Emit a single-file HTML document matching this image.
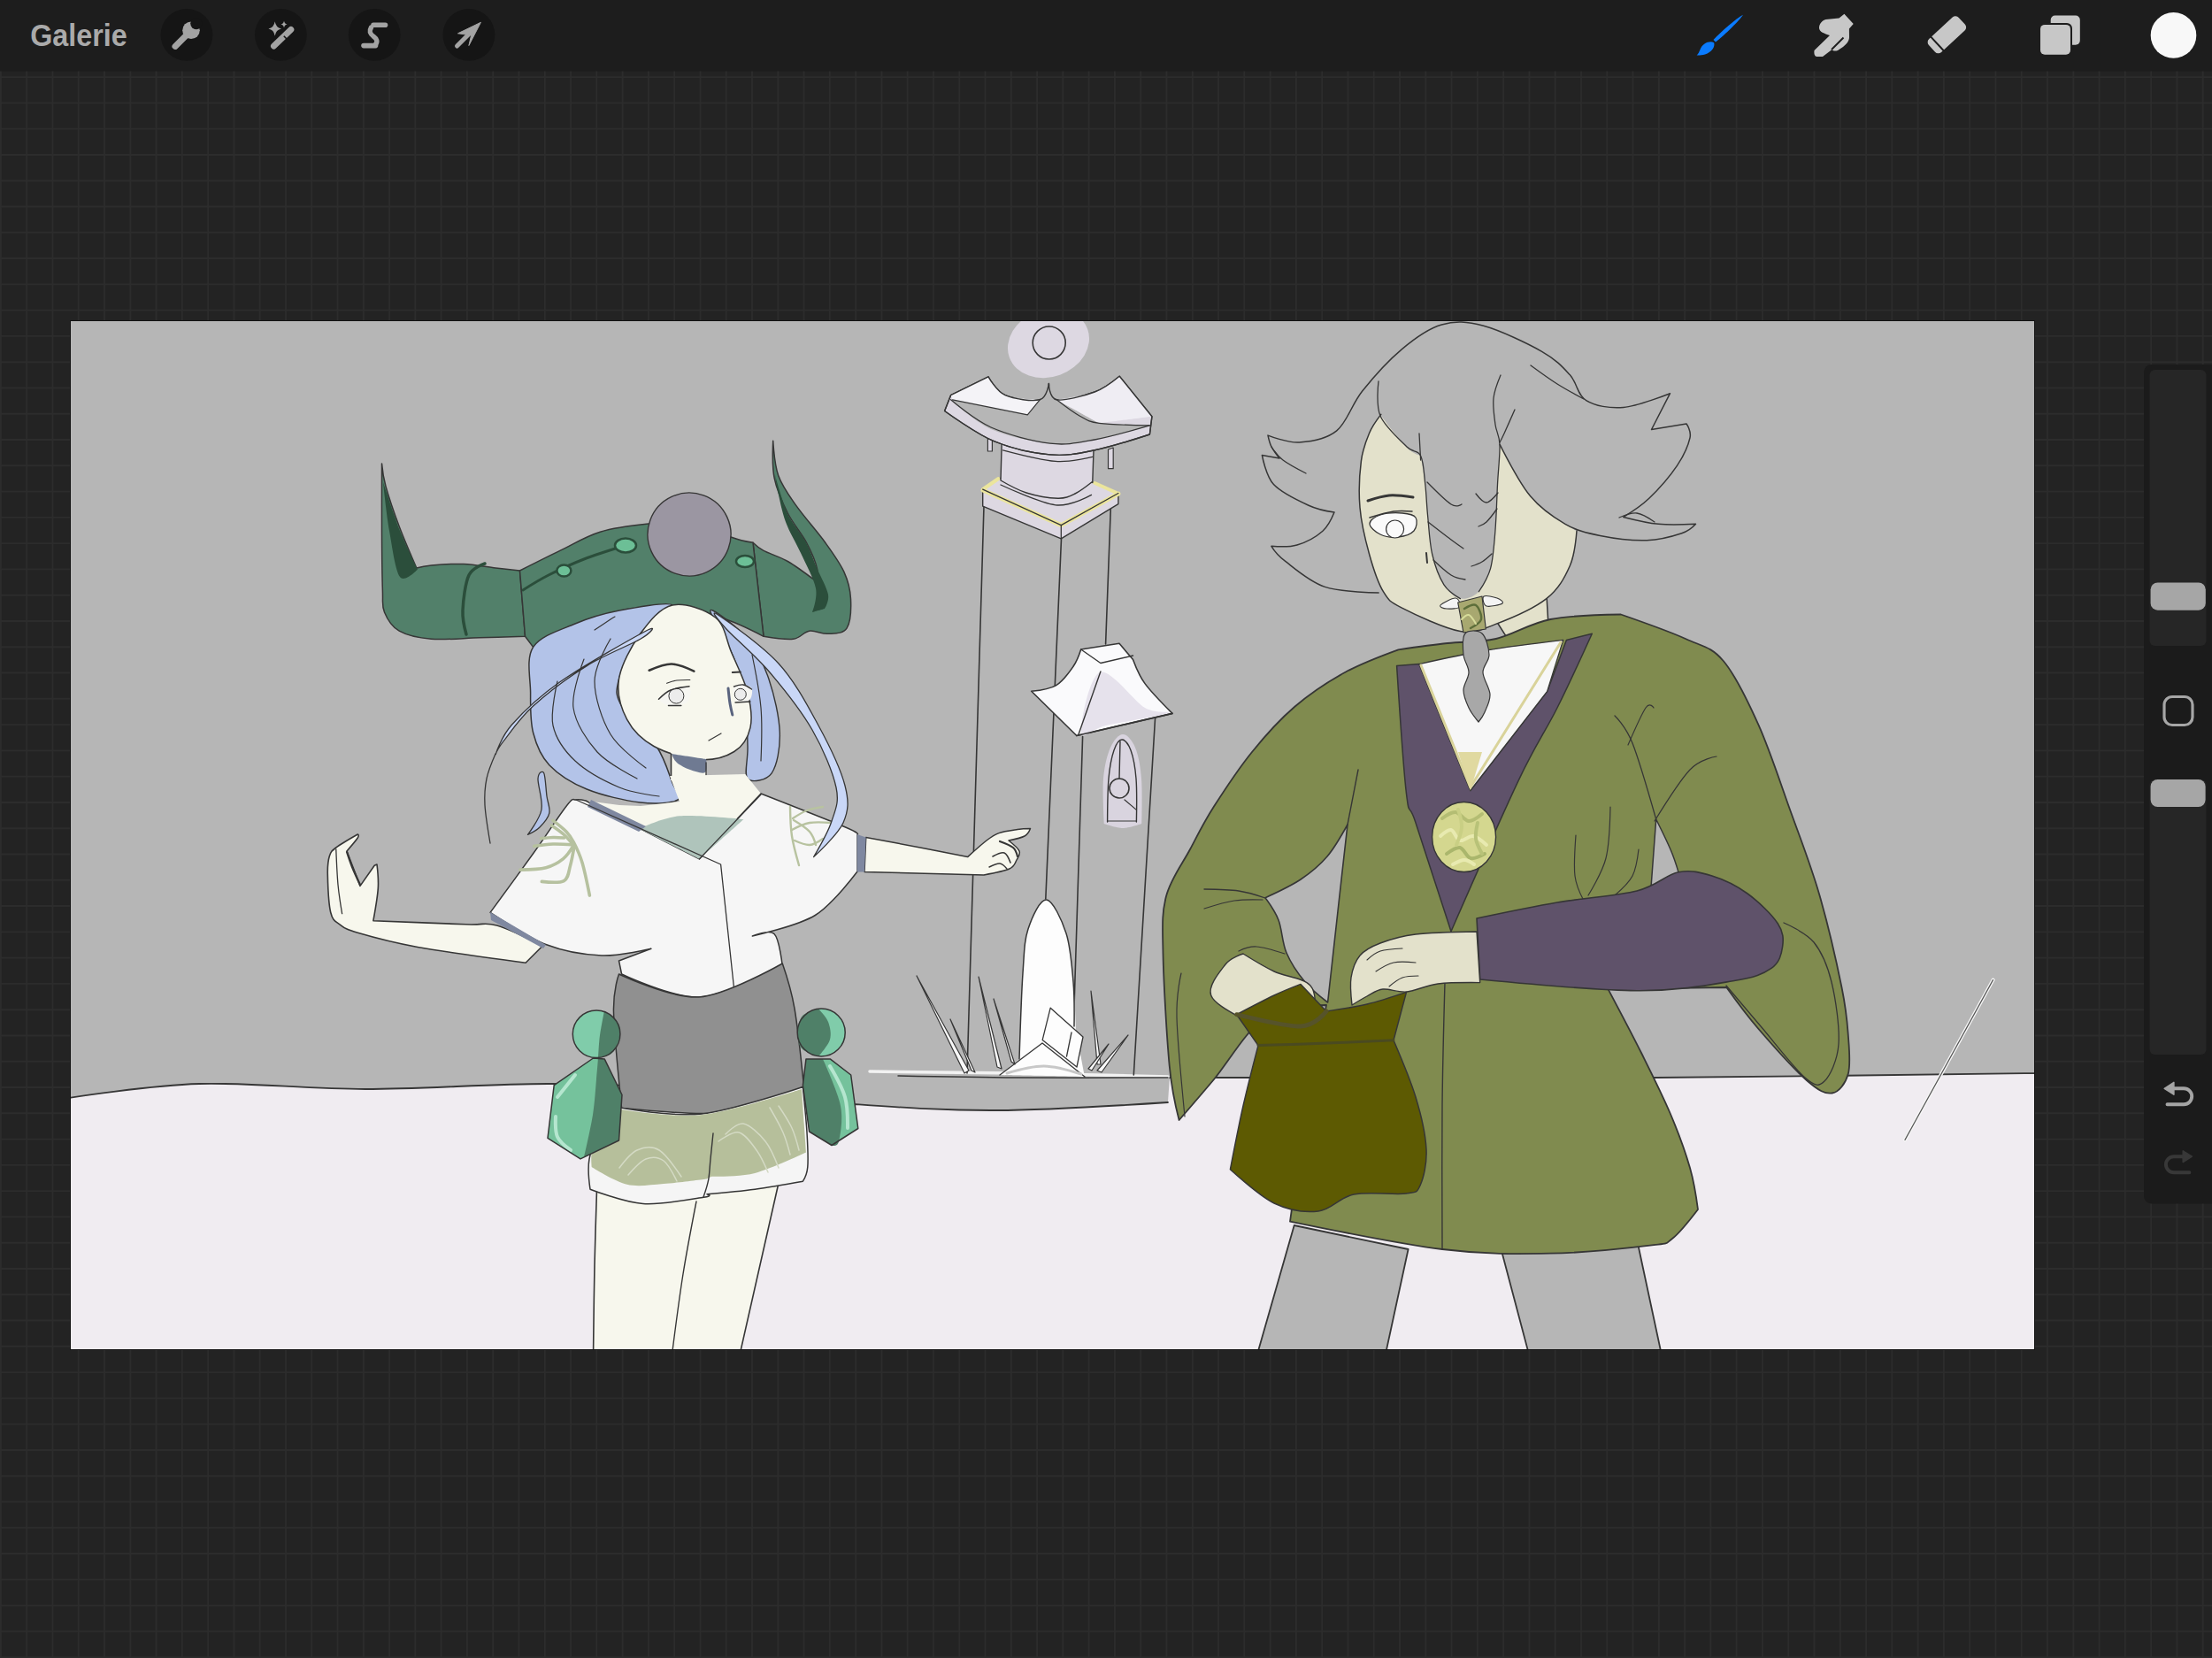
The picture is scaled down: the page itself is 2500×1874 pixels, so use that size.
<!DOCTYPE html>
<html><head><meta charset="utf-8"><style>
html,body{margin:0;padding:0;background:#232323;width:2500px;height:1874px;overflow:hidden}
svg{position:absolute;left:0;top:0;display:block}
</style></head><body>
<svg width="2500" height="1874" viewBox="0 0 2500 1874">
<rect x="0" y="0" width="2500" height="1874" fill="#232323"/>
<path d="M0.90 80V1874 M30.18 80V1874 M59.46 80V1874 M88.74 80V1874 M118.02 80V1874 M147.30 80V1874 M176.58 80V1874 M205.86 80V1874 M235.14 80V1874 M264.42 80V1874 M293.70 80V1874 M322.98 80V1874 M352.26 80V1874 M381.54 80V1874 M410.82 80V1874 M440.10 80V1874 M469.38 80V1874 M498.66 80V1874 M527.94 80V1874 M557.22 80V1874 M586.50 80V1874 M615.78 80V1874 M645.06 80V1874 M674.34 80V1874 M703.62 80V1874 M732.90 80V1874 M762.18 80V1874 M791.46 80V1874 M820.74 80V1874 M850.02 80V1874 M879.30 80V1874 M908.58 80V1874 M937.86 80V1874 M967.14 80V1874 M996.42 80V1874 M1025.70 80V1874 M1054.98 80V1874 M1084.26 80V1874 M1113.54 80V1874 M1142.82 80V1874 M1172.10 80V1874 M1201.38 80V1874 M1230.66 80V1874 M1259.94 80V1874 M1289.22 80V1874 M1318.50 80V1874 M1347.78 80V1874 M1377.06 80V1874 M1406.34 80V1874 M1435.62 80V1874 M1464.90 80V1874 M1494.18 80V1874 M1523.46 80V1874 M1552.74 80V1874 M1582.02 80V1874 M1611.30 80V1874 M1640.58 80V1874 M1669.86 80V1874 M1699.14 80V1874 M1728.42 80V1874 M1757.70 80V1874 M1786.98 80V1874 M1816.26 80V1874 M1845.54 80V1874 M1874.82 80V1874 M1904.10 80V1874 M1933.38 80V1874 M1962.66 80V1874 M1991.94 80V1874 M2021.22 80V1874 M2050.50 80V1874 M2079.78 80V1874 M2109.06 80V1874 M2138.34 80V1874 M2167.62 80V1874 M2196.90 80V1874 M2226.18 80V1874 M2255.46 80V1874 M2284.74 80V1874 M2314.02 80V1874 M2343.30 80V1874 M2372.58 80V1874 M2401.86 80V1874 M2431.14 80V1874 M2460.42 80V1874 M2489.70 80V1874 M0 87.10H2500 M0 116.38H2500 M0 145.66H2500 M0 174.94H2500 M0 204.22H2500 M0 233.50H2500 M0 262.78H2500 M0 292.06H2500 M0 321.34H2500 M0 350.62H2500 M0 379.90H2500 M0 409.18H2500 M0 438.46H2500 M0 467.74H2500 M0 497.02H2500 M0 526.30H2500 M0 555.58H2500 M0 584.86H2500 M0 614.14H2500 M0 643.42H2500 M0 672.70H2500 M0 701.98H2500 M0 731.26H2500 M0 760.54H2500 M0 789.82H2500 M0 819.10H2500 M0 848.38H2500 M0 877.66H2500 M0 906.94H2500 M0 936.22H2500 M0 965.50H2500 M0 994.78H2500 M0 1024.06H2500 M0 1053.34H2500 M0 1082.62H2500 M0 1111.90H2500 M0 1141.18H2500 M0 1170.46H2500 M0 1199.74H2500 M0 1229.02H2500 M0 1258.30H2500 M0 1287.58H2500 M0 1316.86H2500 M0 1346.14H2500 M0 1375.42H2500 M0 1404.70H2500 M0 1433.98H2500 M0 1463.26H2500 M0 1492.54H2500 M0 1521.82H2500 M0 1551.10H2500 M0 1580.38H2500 M0 1609.66H2500 M0 1638.94H2500 M0 1668.22H2500 M0 1697.50H2500 M0 1726.78H2500 M0 1756.06H2500 M0 1785.34H2500 M0 1814.62H2500 M0 1843.90H2500 M0 1873.18H2500" stroke="#2c2c2c" stroke-width="1.9" fill="none"/>
<!-- toolbar -->
<rect x="0" y="0" width="2500" height="80.5" fill="#1d1d1d"/>
<text transform="translate(34.2 51.5) scale(1.01 1.1)" x="0" y="0" font-family="Liberation Sans" font-weight="bold" font-size="32" fill="#aaaaaa">Galerie</text>
<circle cx="211" cy="39.4" r="29.4" fill="#151515"/>
<circle cx="317.4" cy="39.4" r="29.4" fill="#151515"/>
<circle cx="423.2" cy="39.4" r="29.4" fill="#151515"/>
<circle cx="529.9" cy="39.4" r="29.4" fill="#151515"/>
<!-- wrench -->
<g fill="#a3a3a3" stroke="none">
<path d="M198 52.4 L215 35.5" stroke="#a3a3a3" stroke-width="7" stroke-linecap="round"/>
<circle cx="216" cy="34.2" r="9.8"/>
<circle cx="221.8" cy="26.6" r="6.6" fill="#151515"/>
</g>
<!-- wand -->
<path d="M309.5 52 L328.8 33.5" stroke="#a3a3a3" stroke-width="7" stroke-linecap="round"/>
<path d="M320.8 40.8 L324 44" stroke="#151515" stroke-width="1.6"/>
<path d="M310.7 24.3 Q311.8 31.4 318 32.5 Q311.8 33.6 310.7 40.6 Q309.6 33.6 303.4 32.5 Q309.6 31.4 310.7 24.3Z" fill="#a3a3a3"/>
<path d="M321 23.5 Q321.5 27 324.5 27.5 Q321.5 28 321 31.5 Q320.5 28 317.5 27.5 Q320.5 27 321 23.5Z" fill="#a3a3a3"/>
<!-- selection S -->
<path d="M422 28.2 L435.5 28.2" stroke="#a3a3a3" stroke-width="5.6" stroke-linecap="round"/>
<path d="M419.5 31 C416.5 36 419 39 422.5 41.5 C426 44 427 47 424.5 50" stroke="#a3a3a3" stroke-width="5.4" fill="none" stroke-linecap="round"/>
<path d="M411 51.6 L424.5 51.6" stroke="#a3a3a3" stroke-width="5.6" stroke-linecap="round"/>
<!-- arrow -->
<path d="M516.5 52 L532 36.5" stroke="#a3a3a3" stroke-width="5" stroke-linecap="round"/>
<path d="M543.4 25.3 L517.5 37.8 L532.6 39.8 L529.9 51.5 Z" fill="#a3a3a3" stroke="#a3a3a3" stroke-width="1" stroke-linejoin="round"/>
<!-- brush -->
<path d="M1970 16.8 C1966 23 1950 39 1939 47.5 L1936.5 45 C1946 35 1962 21 1970 16.8Z" fill="#0a7bff"/>
<path d="M1937.2 48.2 C1938.6 53 1934.5 59 1927 61.5 C1923 62.6 1919 62.8 1917.6 62.4 C1921.5 59.5 1921 53 1926.5 49.5 C1929.5 47.5 1934 46.5 1937.2 48.2Z" fill="#0a7bff"/>
<!-- smudge -->
<path d="M2050.5 57 L2068 40 C2062 38 2056 36 2056 31.5 C2056 27 2059.5 23 2063.5 22 L2078.5 20.5 L2084.4 15.7 L2094.7 27.1 L2089.9 32.5 L2090 42 C2090 46 2087 50 2083 53 L2077 57 C2074 58 2071 57.5 2070.5 56 L2060 64 L2053.5 64 C2051 64 2050 61 2050.5 57Z" fill="#c7c7c7"/>
<path d="M2070 56 L2083.5 42.5" stroke="#1d1d1d" stroke-width="2"/>
<!-- eraser -->
<g transform="rotate(-42.7 2200.4 39.3)">
<rect x="2177.4" y="29.1" width="46" height="20.4" rx="5" fill="#c7c7c7"/>
<path d="M2185.5 28 L2185.5 51" stroke="#1d1d1d" stroke-width="2"/>
</g>
<!-- layers -->
<rect x="2317.7" y="17.6" width="33.1" height="33.1" rx="5" fill="#c7c7c7"/>
<rect x="2304" y="26" width="38" height="37.7" rx="6" fill="#1d1d1d"/>
<rect x="2306" y="27.9" width="34" height="33.9" rx="5" fill="#c7c7c7"/>
<circle cx="2456.5" cy="39.9" r="25.8" fill="#f8f8f8"/>
<!-- sidebar -->
<rect x="2423" y="412" width="100" height="948.5" rx="8.5" fill="#1b1b1b"/>
<rect x="2429.5" y="418" width="64" height="312" rx="6" fill="#262626"/>
<rect x="2430.6" y="658.4" width="62.2" height="31.3" rx="8" fill="#a6a6a6"/>
<rect x="2429.5" y="881" width="64" height="311" rx="6" fill="#262626"/>
<rect x="2430.6" y="881" width="62" height="31" rx="8" fill="#a6a6a6"/>
<rect x="2446" y="787.5" width="32" height="32" rx="9" fill="none" stroke="#a6a6a6" stroke-width="3.2"/>
<!-- undo / redo -->
<path d="M2456 1230.3 H2468.2 A9 9 0 0 1 2468.2 1248.3 H2449.5" fill="none" stroke="#a4a4a4" stroke-width="3.9" stroke-linecap="round"/>
<path d="M2446.2 1230.3 L2456.9 1223.4 L2456.9 1237.2Z" fill="#a4a4a4" stroke="#a4a4a4" stroke-width="1.5" stroke-linejoin="round"/>
<path d="M2468 1307.2 H2456.9 A9 9 0 0 0 2456.9 1325.2 H2474.4" fill="none" stroke="#383838" stroke-width="3.9" stroke-linecap="round"/>
<path d="M2477.4 1307.2 L2467.2 1300.8 L2467.2 1313.6Z" fill="#383838" stroke="#383838" stroke-width="1.5" stroke-linejoin="round"/>

<g>
<rect x="79" y="362" width="2221" height="1164" fill="#131313"/>
<rect x="80" y="363" width="2219" height="1162" fill="#b6b6b6"/>
<clipPath id="cv"><rect x="80" y="363" width="2219" height="1162"/></clipPath>
<g clip-path="url(#cv)">
<path d="M78.0 1241.0 C78.0 1241.0 169.2 1226.7 225.0 1225.0 C280.8 1223.3 347.0 1231.0 413.0 1231.0 C479.0 1231.0 556.5 1224.8 621.0 1225.0 C685.5 1225.2 742.7 1228.2 800.0 1232.0 C857.3 1235.8 910.7 1244.2 965.0 1248.0 C1019.3 1251.8 1066.8 1255.3 1126.0 1255.0 C1185.2 1254.7 1320.0 1246.0 1320.0 1246.0 C1320.0 1246.0 1322.0 1218.0 1322.0 1218.0 C1322.0 1218.0 1508.3 1218.0 1600.0 1218.0 C1691.7 1218.0 1755.2 1218.8 1872.0 1218.0 C1988.8 1217.2 2301.0 1213.0 2301.0 1213.0 C2301.0 1213.0 2301.0 1527.0 2301.0 1527.0 C2301.0 1527.0 78.0 1527.0 78.0 1527.0 C78.0 1527.0 78.0 1241.0 78.0 1241.0Z" fill="#f0ecf1" stroke="none" stroke-width="2" stroke-linejoin="round" stroke-linecap="round" />
<path d="M78.0 1241.0 C78.0 1241.0 169.2 1226.7 225.0 1225.0 C280.8 1223.3 347.0 1231.0 413.0 1231.0 C479.0 1231.0 556.5 1224.8 621.0 1225.0 C685.5 1225.2 742.7 1228.2 800.0 1232.0 C857.3 1235.8 910.7 1244.2 965.0 1248.0 C1019.3 1251.8 1066.8 1255.3 1126.0 1255.0 C1185.2 1254.7 1320.0 1246.0 1320.0 1246.0" fill="none" stroke="#363636" stroke-width="1.8" stroke-linejoin="round" stroke-linecap="round" />
<path d="M1322.0 1218.0 C1322.0 1218.0 1508.3 1218.0 1600.0 1218.0 C1691.7 1218.0 1755.2 1218.8 1872.0 1218.0 C1988.8 1217.2 2301.0 1213.0 2301.0 1213.0" fill="none" stroke="#363636" stroke-width="1.8" stroke-linejoin="round" stroke-linecap="round" />
<path d="M983.0 1211.0 L1150.0 1213.0 L1320.0 1217.0" fill="none" stroke="#f2f2f2" stroke-width="3.5" stroke-linejoin="round" stroke-linecap="round" />
<path d="M1015.0 1216.0 C1015.0 1216.0 1099.2 1217.7 1150.0 1218.0 C1200.8 1218.3 1320.0 1218.0 1320.0 1218.0" fill="none" stroke="#363636" stroke-width="1.5" stroke-linejoin="round" stroke-linecap="round" />
<ellipse cx="1185" cy="388" rx="47" ry="38" fill="#ddd8e2" transform="rotate(-20 1185 388)"/>
<circle cx="1185.7" cy="387.5" r="18.5" fill="none" stroke="#363636" stroke-width="1.6"/>
<path d="M1112.0 572.0 L1093.0 1213.0" fill="none" stroke="#363636" stroke-width="1.6" stroke-linejoin="round" stroke-linecap="round" />
<path d="M1199.5 609.0 L1181.8 1016.0" fill="none" stroke="#363636" stroke-width="1.6" stroke-linejoin="round" stroke-linecap="round" />
<path d="M1255.4 572.0 L1249.6 728.0" fill="none" stroke="#363636" stroke-width="1.6" stroke-linejoin="round" stroke-linecap="round" />
<path d="M1305.6 811.0 L1281.3 1215.0" fill="none" stroke="#363636" stroke-width="1.6" stroke-linejoin="round" stroke-linecap="round" />
<path d="M1223.6 832.5 L1213.4 1157.0" fill="none" stroke="#363636" stroke-width="1.6" stroke-linejoin="round" stroke-linecap="round" />
<path d="M1116.4 495.0 L1116.4 510.0 L1121.4 510.0 L1121.4 497.0Z" fill="#ddd8e2" stroke="#363636" stroke-width="1.2" stroke-linejoin="round" stroke-linecap="round" />
<path d="M1252.5 508.0 L1252.5 529.7 L1258.2 529.7 L1258.2 506.0Z" fill="#ddd8e2" stroke="#363636" stroke-width="1.2" stroke-linejoin="round" stroke-linecap="round" />
<path d="M1110.7 553.1 L1128.4 540.4 L1237.3 545.5 L1263.9 557.5 L1263.9 569.6 L1199.3 608.8 L1110.7 572.1Z" fill="#ddd8e2" stroke="#363636" stroke-width="1.4" stroke-linejoin="round" stroke-linecap="round" />
<path d="M1111.0 554.0 L1199.3 593.6 L1263.9 558.0" fill="none" stroke="#ebe59c" stroke-width="5" stroke-linejoin="round" stroke-linecap="round" />
<path d="M1111.0 553.0 L1128.4 541.0" fill="none" stroke="#ebe59c" stroke-width="4" stroke-linejoin="round" stroke-linecap="round" />
<path d="M1237.3 546.0 L1262.0 557.0" fill="none" stroke="#ebe59c" stroke-width="4" stroke-linejoin="round" stroke-linecap="round" />
<path d="M1110.7 553.1 L1199.3 593.6 L1263.9 557.5" fill="none" stroke="#363636" stroke-width="1.3" stroke-linejoin="round" stroke-linecap="round" />
<path d="M1199.3 593.6 L1199.3 608.8" fill="none" stroke="#363636" stroke-width="1.3" stroke-linejoin="round" stroke-linecap="round" />
<path d="M1132.2 500.0 C1132.2 500.0 1167.7 506.5 1185.0 508.0 C1202.3 509.5 1236.0 509.0 1236.0 509.0 C1236.0 509.0 1234.8 544.2 1234.8 544.2 C1234.8 544.2 1221.5 554.8 1215.0 558.0 C1208.5 561.2 1204.7 563.4 1195.5 563.2 C1186.3 563.0 1170.8 560.4 1160.0 557.0 C1149.2 553.6 1131.0 543.0 1131.0 543.0 C1131.0 543.0 1132.2 500.0 1132.2 500.0Z" fill="#ddd8e2" stroke="#363636" stroke-width="1.4" stroke-linejoin="round" stroke-linecap="round" />
<path d="M1131.0 548.0 C1131.0 548.0 1175.9 568.9 1193.0 570.8 C1210.1 572.7 1233.5 559.4 1233.5 559.4" fill="none" stroke="#363636" stroke-width="1.3" stroke-linejoin="round" stroke-linecap="round" />
<path d="M1133.5 508.8 C1133.5 508.8 1176.1 520.1 1193.0 521.4 C1209.9 522.7 1234.8 516.4 1234.8 516.4" fill="none" stroke="#363636" stroke-width="1.3" stroke-linejoin="round" stroke-linecap="round" />
<path d="M1117.0 425.8 C1117.0 425.8 1074.6 446.7 1074.6 446.7 C1074.6 446.7 1067.6 464.5 1067.6 464.5 C1067.6 464.5 1103.5 490.5 1123.3 498.7 C1143.1 506.9 1167.6 512.2 1186.6 513.9 C1205.6 515.6 1218.5 512.6 1237.3 508.8 C1256.1 505.0 1299.4 491.0 1299.4 491.0 C1299.4 491.0 1301.9 470.8 1301.9 470.8 C1301.9 470.8 1265.2 425.2 1265.2 425.2 C1265.2 425.2 1249.1 438.6 1237.3 443.0 C1225.5 447.4 1202.8 453.4 1194.2 451.8 C1185.6 450.2 1185.4 433.4 1185.4 433.4 C1185.4 433.4 1183.4 449.6 1175.2 451.8 C1167.0 454.0 1145.7 451.0 1136.0 446.7 C1126.3 442.4 1117.0 425.8 1117.0 425.8Z" fill="#ddd8e2" stroke="#363636" stroke-width="1.4" stroke-linejoin="round" stroke-linecap="round" />
<path d="M1175.2 451.8 C1175.2 451.8 1185.4 433.4 1185.4 433.4 C1185.4 433.4 1194.2 451.8 1194.2 451.8 C1194.2 451.8 1242.4 478.4 1242.4 478.4 C1242.4 478.4 1299.4 480.9 1299.4 480.9 C1299.4 480.9 1255.8 493.6 1237.0 497.0 C1218.2 500.4 1206.1 503.2 1186.6 501.2 C1167.1 499.2 1138.7 493.2 1120.0 485.0 C1101.3 476.8 1074.6 451.8 1074.6 451.8 C1074.6 451.8 1161.3 468.9 1161.3 468.9 C1161.3 468.9 1175.2 451.8 1175.2 451.8Z" fill="#b6b6b6" stroke="none" stroke-width="2" stroke-linejoin="round" stroke-linecap="round" />
<path d="M1117.0 425.8 C1117.0 425.8 1126.3 442.4 1136.0 446.7 C1145.7 451.0 1175.2 451.8 1175.2 451.8 C1175.2 451.8 1161.3 468.9 1161.3 468.9 C1161.3 468.9 1076.5 451.8 1076.5 451.8 C1076.5 451.8 1074.6 446.7 1074.6 446.7 C1074.6 446.7 1117.0 425.8 1117.0 425.8Z" fill="#f4f3f7" stroke="none" stroke-width="2" stroke-linejoin="round" stroke-linecap="round" />
<path d="M1265.2 425.2 C1265.2 425.2 1301.9 470.8 1301.9 470.8 C1301.9 470.8 1242.4 478.4 1242.4 478.4 C1242.4 478.4 1194.2 451.8 1194.2 451.8 C1194.2 451.8 1225.5 447.4 1237.3 443.0 C1249.1 438.6 1265.2 425.2 1265.2 425.2Z" fill="#efedf3" stroke="none" stroke-width="2" stroke-linejoin="round" stroke-linecap="round" />
<path d="M1117.0 425.8 C1117.0 425.8 1074.6 446.7 1074.6 446.7 C1074.6 446.7 1067.6 464.5 1067.6 464.5 C1067.6 464.5 1103.5 490.5 1123.3 498.7 C1143.1 506.9 1167.6 512.2 1186.6 513.9 C1205.6 515.6 1218.5 512.6 1237.3 508.8 C1256.1 505.0 1299.4 491.0 1299.4 491.0 C1299.4 491.0 1301.9 470.8 1301.9 470.8 C1301.9 470.8 1265.2 425.2 1265.2 425.2 C1265.2 425.2 1249.1 438.6 1237.3 443.0 C1225.5 447.4 1202.8 453.4 1194.2 451.8 C1185.6 450.2 1185.4 433.4 1185.4 433.4 C1185.4 433.4 1183.4 449.6 1175.2 451.8 C1167.0 454.0 1145.7 451.0 1136.0 446.7 C1126.3 442.4 1117.0 425.8 1117.0 425.8Z" fill="none" stroke="#363636" stroke-width="1.4" stroke-linejoin="round" stroke-linecap="round" />
<path d="M1074.6 451.8 C1074.6 451.8 1101.3 474.8 1120.0 483.0 C1138.7 491.2 1167.1 498.9 1186.6 501.2 C1206.1 503.5 1218.2 500.4 1237.0 497.0 C1255.8 493.6 1299.4 480.9 1299.4 480.9" fill="none" stroke="#363636" stroke-width="1.3" stroke-linejoin="round" stroke-linecap="round" />
<path d="M1076.5 451.8 L1161.3 468.9 L1175.2 451.8" fill="none" stroke="#363636" stroke-width="1.2" stroke-linejoin="round" stroke-linecap="round" />
<path d="M1194.2 451.8 C1194.2 451.8 1212.0 465.6 1220.0 470.0 C1228.0 474.4 1229.2 476.6 1242.4 478.4 C1255.6 480.2 1299.4 480.9 1299.4 480.9" fill="none" stroke="#363636" stroke-width="1.2" stroke-linejoin="round" stroke-linecap="round" />
<path d="M1221.7 734.0 C1221.7 734.0 1265.0 727.3 1265.0 727.3 C1265.0 727.3 1280.5 745.6 1280.5 745.6 C1280.5 745.6 1286.6 762.5 1294.0 772.6 C1301.4 782.7 1325.0 806.4 1325.0 806.4 C1325.0 806.4 1216.8 831.5 1216.8 831.5 C1216.8 831.5 1165.7 781.3 1165.7 781.3 C1165.7 781.3 1185.8 779.3 1193.7 774.6 C1201.6 769.9 1208.3 760.1 1213.0 753.3 C1217.7 746.5 1221.7 734.0 1221.7 734.0Z" fill="#fafafc" stroke="#363636" stroke-width="1.6" stroke-linejoin="round" stroke-linecap="round" />
<path d="M1243.0 760.0 C1255.0 755.3 1281.2 792.3 1294.0 800.0 C1306.8 807.7 1327.3 802.7 1320.0 806.0 C1312.7 809.3 1266.3 816.3 1250.0 820.0 C1233.7 823.7 1223.2 838.0 1222.0 828.0 C1220.8 818.0 1231.0 764.7 1243.0 760.0Z" fill="#e6e2ec" stroke="none" stroke-width="2" stroke-linejoin="round" stroke-linecap="round" />
<path d="M1221.7 734.0 L1243.9 749.5 L1280.5 741.0" fill="none" stroke="#363636" stroke-width="1.4" stroke-linejoin="round" stroke-linecap="round" />
<path d="M1243.9 759.0 L1218.8 830.5" fill="none" stroke="#363636" stroke-width="1.4" stroke-linejoin="round" stroke-linecap="round" />
<path d="M1216.8 831.5 L1325.0 806.4" fill="none" stroke="#363636" stroke-width="1.6" stroke-linejoin="round" stroke-linecap="round" />
<path d="M1247.7 931.0 C1247.7 931.0 1245.8 894.3 1247.0 880.0 C1248.2 865.7 1251.3 853.3 1255.0 845.0 C1258.7 836.7 1264.3 830.0 1269.0 830.0 C1273.7 830.0 1279.5 836.7 1283.0 845.0 C1286.5 853.3 1288.8 865.7 1290.0 880.0 C1291.2 894.3 1290.2 931.0 1290.2 931.0 C1290.2 931.0 1276.1 936.0 1269.0 936.0 C1261.9 936.0 1247.7 931.0 1247.7 931.0Z" fill="#d9d4df" stroke="none" stroke-width="2" stroke-linejoin="round" stroke-linecap="round" />
<path d="M1251.6 929.0 C1251.6 929.0 1251.8 893.5 1253.0 880.0 C1254.2 866.5 1256.5 855.3 1259.0 848.0 C1261.5 840.7 1264.8 836.0 1268.0 836.0 C1271.2 836.0 1275.3 840.7 1278.0 848.0 C1280.7 855.3 1282.9 866.5 1284.0 880.0 C1285.1 893.5 1284.4 929.0 1284.4 929.0" fill="none" stroke="#363636" stroke-width="1.4" stroke-linejoin="round" stroke-linecap="round" />
<path d="M1251.6 928.0 L1284.4 928.0" fill="none" stroke="#363636" stroke-width="1.2" stroke-linejoin="round" stroke-linecap="round" />
<circle cx="1265" cy="891" r="11" fill="none" stroke="#363636" stroke-width="1.6"/>
<path d="M1266.0 838.0 L1265.0 880.0" fill="none" stroke="#363636" stroke-width="1.4" stroke-linejoin="round" stroke-linecap="round" />
<path d="M1271.0 904.0 L1284.4 915.4" fill="none" stroke="#363636" stroke-width="1.2" stroke-linejoin="round" stroke-linecap="round" />
<path d="M1182.7 1017.0 C1189.9 1017.8 1200.0 1039.5 1205.0 1055.0 C1210.0 1070.5 1211.2 1091.7 1213.0 1110.0 C1214.8 1128.3 1216.0 1165.0 1216.0 1165.0 C1216.0 1165.0 1226.0 1217.0 1226.0 1217.0 C1226.0 1217.0 1130.0 1215.0 1130.0 1215.0 C1130.0 1215.0 1152.0 1197.0 1152.0 1197.0 C1152.0 1197.0 1154.3 1124.5 1156.0 1100.0 C1157.7 1075.5 1157.5 1063.8 1162.0 1050.0 C1166.5 1036.2 1175.5 1016.2 1182.7 1017.0Z" fill="#fdfdfd" stroke="none" stroke-width="2" stroke-linejoin="round" stroke-linecap="round" />
<path d="M1152.0 1197.0 C1152.0 1197.0 1154.3 1124.5 1156.0 1100.0 C1157.7 1075.5 1157.5 1063.8 1162.0 1050.0 C1166.5 1036.2 1175.5 1016.2 1182.7 1017.0 C1189.9 1017.8 1200.0 1039.5 1205.0 1055.0 C1210.0 1070.5 1211.5 1092.5 1213.0 1110.0 C1214.5 1127.5 1214.0 1160.0 1214.0 1160.0" fill="none" stroke="#363636" stroke-width="1.5" stroke-linejoin="round" stroke-linecap="round" />
<path d="M1187.2 1139.2 L1224.0 1172.0 L1217.0 1206.0 L1178.2 1175.4Z" fill="#fdfdfd" stroke="#363636" stroke-width="1.3" stroke-linejoin="round" stroke-linecap="round" />
<path d="M1211.0 1167.0 L1205.5 1194.0" fill="none" stroke="#363636" stroke-width="1.3" stroke-linejoin="round" stroke-linecap="round" />
<path d="M1130.0 1215.0 L1178.0 1179.0 L1226.0 1217.0" fill="none" stroke="#363636" stroke-width="1.3" stroke-linejoin="round" stroke-linecap="round" />
<path d="M1138.0 1213.0 C1138.0 1213.0 1166.0 1204.8 1180.0 1205.0 C1194.0 1205.2 1222.0 1214.0 1222.0 1214.0" fill="none" stroke="#c8c8c8" stroke-width="3" stroke-linejoin="round" stroke-linecap="round" />
<path d="M1036.0 1103.0 L1090.0 1213.0 L1095.0 1210.0Z" fill="#f8f8f8" stroke="#363636" stroke-width="1.2" stroke-linejoin="round" stroke-linecap="round" />
<path d="M1106.0 1104.0 L1127.0 1206.0 L1132.0 1208.0Z" fill="#f8f8f8" stroke="#363636" stroke-width="1.2" stroke-linejoin="round" stroke-linecap="round" />
<path d="M1123.0 1129.0 L1143.0 1200.0 L1147.0 1203.0Z" fill="#f8f8f8" stroke="#363636" stroke-width="1.2" stroke-linejoin="round" stroke-linecap="round" />
<path d="M1233.0 1120.0 L1240.0 1203.0 L1244.0 1203.0Z" fill="#f8f8f8" stroke="#363636" stroke-width="1.2" stroke-linejoin="round" stroke-linecap="round" />
<path d="M1275.0 1170.0 L1240.0 1210.0 L1245.0 1212.0Z" fill="#f8f8f8" stroke="#363636" stroke-width="1.2" stroke-linejoin="round" stroke-linecap="round" />
<path d="M1074.0 1152.0 L1098.0 1210.0 L1102.0 1212.0Z" fill="#f8f8f8" stroke="#363636" stroke-width="1.2" stroke-linejoin="round" stroke-linecap="round" />
<path d="M1253.0 1180.0 L1230.0 1208.0 L1234.0 1210.0Z" fill="#f8f8f8" stroke="#363636" stroke-width="1.2" stroke-linejoin="round" stroke-linecap="round" />
<path d="M990.0 1212.0 L1322.0 1217.0" fill="none" stroke="none" stroke-width="1" stroke-linejoin="round" stroke-linecap="round" />
<path d="M1462.7 1385.0 L1591.6 1412.0 L1566.7 1527.0 L1422.0 1527.0Z" fill="#b6b6b6" stroke="#363636" stroke-width="1.8" stroke-linejoin="round" stroke-linecap="round" />
<path d="M1697.8 1416.7 L1851.5 1407.7 L1877.0 1527.0 L1727.0 1527.0Z" fill="#b6b6b6" stroke="#363636" stroke-width="1.8" stroke-linejoin="round" stroke-linecap="round" />
<path d="M1747.8 670.0 L1750.5 716.1 L1713.6 737.2 L1689.9 700.0Z" fill="#e3e1cb" stroke="#363636" stroke-width="1.5" stroke-linejoin="round" stroke-linecap="round" />
<path d="M1580.4 734.3 C1580.4 734.3 1617.6 729.0 1636.0 727.0 C1654.4 725.0 1671.4 726.5 1690.8 722.0 C1710.2 717.5 1728.8 704.6 1752.3 700.0 C1775.8 695.4 1831.9 694.5 1831.9 694.5 C1831.9 694.5 1885.7 713.2 1905.0 722.0 C1924.3 730.8 1934.0 730.8 1947.7 747.0 C1961.5 763.2 1974.8 791.1 1987.5 819.4 C2000.2 847.7 2012.2 885.1 2023.7 917.0 C2035.2 948.9 2046.6 977.8 2056.2 1011.0 C2065.8 1044.2 2076.1 1089.5 2081.5 1116.0 C2086.9 1142.5 2087.6 1153.7 2088.8 1170.0 C2090.0 1186.3 2091.8 1202.8 2088.8 1213.7 C2085.8 1224.6 2078.5 1234.3 2070.7 1235.5 C2062.9 1236.7 2055.7 1233.1 2041.8 1221.0 C2027.9 1208.9 2002.6 1180.5 1987.5 1163.0 C1972.4 1145.5 1951.3 1116.0 1951.3 1116.0 C1951.3 1116.0 1817.4 1117.8 1817.4 1117.8 C1817.4 1117.8 1843.3 1166.5 1855.0 1190.0 C1866.7 1213.5 1878.5 1236.8 1887.7 1258.5 C1896.9 1280.2 1904.8 1301.9 1910.0 1320.0 C1915.2 1338.1 1919.0 1367.0 1919.0 1367.0 C1919.0 1367.0 1899.0 1393.2 1890.0 1400.0 C1881.0 1406.8 1888.0 1404.9 1865.0 1407.7 C1842.0 1410.5 1791.2 1416.0 1752.0 1416.7 C1712.8 1417.4 1679.0 1418.0 1630.0 1412.0 C1581.0 1406.0 1458.0 1380.6 1458.0 1380.6 C1458.0 1380.6 1463.2 1340.8 1470.0 1300.0 C1476.8 1259.2 1499.0 1136.0 1499.0 1136.0 C1499.0 1136.0 1451.2 1136.0 1430.0 1150.0 C1408.8 1164.0 1388.2 1200.7 1372.0 1220.0 C1355.8 1239.3 1332.6 1266.0 1332.6 1266.0 C1332.6 1266.0 1324.7 1235.9 1321.7 1204.6 C1318.7 1173.3 1315.1 1109.9 1314.5 1078.0 C1313.9 1046.1 1312.9 1032.7 1318.0 1013.0 C1323.1 993.3 1336.0 976.9 1345.0 960.0 C1354.0 943.1 1360.3 929.9 1372.0 911.6 C1383.7 893.3 1399.8 868.8 1415.0 850.0 C1430.2 831.2 1445.5 814.0 1463.0 799.0 C1480.5 784.0 1500.4 770.8 1520.0 760.0 C1539.6 749.2 1580.4 734.3 1580.4 734.3Z" fill="#808b4f" stroke="#363636" stroke-width="1.8" stroke-linejoin="round" stroke-linecap="round" />
<path d="M1523.0 932.0 C1523.0 932.0 1508.8 957.7 1500.0 968.0 C1491.2 978.3 1481.7 986.2 1470.0 994.0 C1458.3 1001.8 1430.0 1014.7 1430.0 1014.7 C1430.0 1014.7 1441.0 1029.6 1445.0 1040.0 C1449.0 1050.4 1449.0 1065.3 1454.0 1077.0 C1459.0 1088.7 1467.2 1100.7 1475.0 1110.0 C1482.8 1119.3 1500.6 1133.0 1500.6 1133.0 C1500.6 1133.0 1508.3 1063.5 1512.0 1030.0 C1515.7 996.5 1523.0 932.0 1523.0 932.0Z" fill="#b6b6b6" stroke="#363636" stroke-width="1.6" stroke-linejoin="round" stroke-linecap="round" />
<path d="M1535.0 870.0 L1523.0 932.0" fill="none" stroke="#363636" stroke-width="1.4" stroke-linejoin="round" stroke-linecap="round" />
<path d="M1871.7 926.0 C1871.7 926.0 1885.2 952.9 1890.0 965.0 C1894.8 977.1 1900.6 998.4 1900.6 998.4 C1900.6 998.4 1866.0 1003.0 1866.0 1003.0 C1866.0 1003.0 1871.7 926.0 1871.7 926.0Z" fill="#b6b6b6" stroke="#363636" stroke-width="1.5" stroke-linejoin="round" stroke-linecap="round" />
<path d="M1361.0 1005.0 C1361.0 1005.0 1388.5 1005.3 1400.0 1007.0 C1411.5 1008.7 1430.0 1015.0 1430.0 1015.0" fill="none" stroke="#363636" stroke-width="1.3" stroke-linejoin="round" stroke-linecap="round" />
<path d="M1361.0 1027.0 C1361.0 1027.0 1384.0 1019.7 1395.0 1018.0 C1406.0 1016.3 1427.0 1017.0 1427.0 1017.0" fill="none" stroke="#363636" stroke-width="1.2" stroke-linejoin="round" stroke-linecap="round" />
<path d="M1339.0 1262.0 C1339.0 1262.0 1330.7 1177.0 1330.0 1150.0 C1329.3 1123.0 1335.0 1100.0 1335.0 1100.0" fill="none" stroke="#363636" stroke-width="1.2" stroke-linejoin="round" stroke-linecap="round" />
<path d="M1452.0 1078.0 C1452.0 1078.0 1428.7 1070.5 1420.0 1070.0 C1411.3 1069.5 1400.0 1075.0 1400.0 1075.0" fill="none" stroke="#363636" stroke-width="1.2" stroke-linejoin="round" stroke-linecap="round" />
<path d="M1951.0 1114.0 C1951.0 1114.0 1975.2 1142.7 1990.0 1160.0 C2004.8 1177.3 2028.0 1207.7 2040.0 1218.0 C2052.0 1228.3 2055.7 1228.3 2062.0 1222.0 C2068.3 1215.7 2076.7 1198.7 2078.0 1180.0 C2079.3 1161.3 2074.7 1129.2 2070.0 1110.0 C2065.3 1090.8 2059.0 1076.2 2050.0 1065.0 C2041.0 1053.8 2016.0 1043.0 2016.0 1043.0" fill="none" stroke="#363636" stroke-width="1.3" stroke-linejoin="round" stroke-linecap="round" />
<path d="M1825.0 809.0 C1825.0 809.0 1837.2 820.5 1845.0 840.0 C1852.8 859.5 1871.7 926.0 1871.7 926.0" fill="none" stroke="#363636" stroke-width="1.3" stroke-linejoin="round" stroke-linecap="round" />
<path d="M1870.0 928.0 C1870.0 928.0 1898.3 882.2 1910.0 870.0 C1921.7 857.8 1940.0 855.0 1940.0 855.0" fill="none" stroke="#363636" stroke-width="1.2" stroke-linejoin="round" stroke-linecap="round" />
<path d="M1840.0 842.0 C1840.0 842.0 1855.2 807.0 1860.0 800.0 C1864.8 793.0 1869.0 800.0 1869.0 800.0" fill="none" stroke="#363636" stroke-width="1.2" stroke-linejoin="round" stroke-linecap="round" />
<path d="M1633.0 1110.0 C1633.0 1110.0 1630.5 1199.7 1630.0 1250.0 C1629.5 1300.3 1630.0 1412.0 1630.0 1412.0" fill="none" stroke="#363636" stroke-width="1.4" stroke-linejoin="round" stroke-linecap="round" />
<path d="M1781.0 944.0 C1781.0 944.0 1778.5 977.7 1780.0 990.0 C1781.5 1002.3 1790.0 1018.0 1790.0 1018.0" fill="none" stroke="#363636" stroke-width="1.2" stroke-linejoin="round" stroke-linecap="round" />
<path d="M1820.0 912.0 C1820.0 912.0 1819.2 953.3 1815.0 970.0 C1810.8 986.7 1795.0 1012.0 1795.0 1012.0" fill="none" stroke="#363636" stroke-width="1.2" stroke-linejoin="round" stroke-linecap="round" />
<path d="M1852.0 960.0 C1852.0 960.0 1849.5 981.3 1845.0 990.0 C1840.5 998.7 1825.0 1012.0 1825.0 1012.0" fill="none" stroke="#363636" stroke-width="1.2" stroke-linejoin="round" stroke-linecap="round" />
<path d="M1578.6 752.4 C1578.6 752.4 1604.0 750.6 1604.0 750.6 C1604.0 750.6 1661.8 893.5 1661.8 893.5 C1661.8 893.5 1748.7 781.3 1748.7 781.3 C1748.7 781.3 1770.4 723.4 1770.4 723.4 C1770.4 723.4 1799.3 716.2 1799.3 716.2 C1799.3 716.2 1773.9 772.3 1760.0 800.0 C1746.1 827.7 1736.0 840.5 1716.0 882.6 C1696.0 924.7 1640.0 1052.7 1640.0 1052.7 C1640.0 1052.7 1608.4 955.9 1600.0 930.0 C1591.6 904.1 1593.1 926.7 1589.5 897.1 C1585.9 867.5 1578.6 752.4 1578.6 752.4Z" fill="#5f526a" stroke="#363636" stroke-width="1.5" stroke-linejoin="round" stroke-linecap="round" />
<path d="M1604.0 750.6 C1604.0 750.6 1652.9 739.5 1680.0 735.0 C1707.1 730.5 1766.7 723.4 1766.7 723.4 C1766.7 723.4 1748.7 781.3 1748.7 781.3 C1748.7 781.3 1661.8 893.5 1661.8 893.5 C1661.8 893.5 1604.0 750.6 1604.0 750.6Z" fill="#f7f7f7" stroke="#363636" stroke-width="1.3" stroke-linejoin="round" stroke-linecap="round" />
<path d="M1606.0 752.0 L1661.8 890.0 L1764.0 726.0" fill="none" stroke="#d9d39a" stroke-width="3" stroke-linejoin="round" stroke-linecap="round" />
<path d="M1648.0 850.0 L1675.0 850.0 L1661.8 893.5Z" fill="#e0d9a0" stroke="none" stroke-width="2" stroke-linejoin="round" stroke-linecap="round" />
<ellipse cx="1654.6" cy="946" rx="36" ry="39.5" fill="#d4d78f" stroke="#363636" stroke-width="1.4"/>
<path d="M1630.0 925.0 C1630.0 925.0 1640.0 917.5 1645.0 918.0 C1650.0 918.5 1655.0 927.7 1660.0 928.0 C1665.0 928.3 1675.0 920.0 1675.0 920.0" fill="none" stroke="#b4bd73" stroke-width="4" stroke-linejoin="round" stroke-linecap="round" />
<path d="M1628.0 945.0 C1628.0 945.0 1636.3 937.2 1640.0 938.0 C1643.7 938.8 1645.8 948.8 1650.0 950.0 C1654.2 951.2 1660.0 944.2 1665.0 945.0 C1670.0 945.8 1680.0 955.0 1680.0 955.0" fill="none" stroke="#e8eab0" stroke-width="4" stroke-linejoin="round" stroke-linecap="round" />
<path d="M1635.0 965.0 C1635.0 965.0 1645.5 957.2 1650.0 958.0 C1654.5 958.8 1657.3 968.8 1662.0 970.0 C1666.7 971.2 1678.0 965.0 1678.0 965.0" fill="none" stroke="#aab66c" stroke-width="4" stroke-linejoin="round" stroke-linecap="round" />
<path d="M1642.0 977.0 C1642.0 977.0 1651.0 972.0 1655.0 972.0 C1659.0 972.0 1666.0 977.0 1666.0 977.0" fill="none" stroke="#e8eab0" stroke-width="4" stroke-linejoin="round" stroke-linecap="round" />
<path d="M1648.0 915.0 C1648.0 915.0 1652.3 928.3 1652.0 935.0 C1651.7 941.7 1646.0 955.0 1646.0 955.0" fill="none" stroke="#c9cf84" stroke-width="4" stroke-linejoin="round" stroke-linecap="round" />
<path d="M1670.0 930.0 C1670.0 930.0 1667.2 942.2 1668.0 948.0 C1668.8 953.8 1675.0 965.0 1675.0 965.0" fill="none" stroke="#b8c278" stroke-width="4" stroke-linejoin="round" stroke-linecap="round" />
<path d="M1669.0 1038.0 C1669.0 1038.0 1729.8 1025.2 1760.0 1020.0 C1790.2 1014.8 1827.2 1012.7 1850.0 1007.0 C1872.8 1001.3 1882.8 988.6 1897.0 985.8 C1911.2 983.0 1922.0 986.0 1935.0 990.0 C1948.0 994.0 1962.6 1001.0 1975.0 1010.0 C1987.4 1019.0 2002.6 1033.7 2009.2 1043.7 C2015.8 1053.7 2015.8 1061.5 2014.6 1070.0 C2013.4 1078.5 2011.3 1087.9 2002.0 1094.4 C1992.7 1100.9 1983.8 1104.6 1958.5 1108.8 C1933.2 1113.0 1897.6 1120.0 1850.0 1119.7 C1802.4 1119.4 1672.7 1107.0 1672.7 1107.0 C1672.7 1107.0 1669.0 1038.0 1669.0 1038.0Z" fill="#5f526a" stroke="#363636" stroke-width="1.6" stroke-linejoin="round" stroke-linecap="round" />
<path d="M1669.0 1053.0 C1669.0 1053.0 1618.2 1053.8 1600.0 1056.0 C1581.8 1058.2 1570.5 1062.0 1560.0 1066.0 C1549.5 1070.0 1542.5 1073.5 1537.0 1080.0 C1531.5 1086.5 1528.5 1095.7 1527.0 1105.0 C1525.5 1114.3 1528.0 1136.0 1528.0 1136.0 C1528.0 1136.0 1539.2 1129.0 1545.0 1126.0 C1550.8 1123.0 1555.5 1118.8 1563.0 1118.0 C1570.5 1117.2 1579.7 1122.0 1590.0 1121.0 C1600.3 1120.0 1611.2 1113.7 1625.0 1112.0 C1638.8 1110.3 1672.7 1110.6 1672.7 1110.6 C1672.7 1110.6 1669.0 1053.0 1669.0 1053.0Z" fill="#e3e1cb" stroke="#363636" stroke-width="1.4" stroke-linejoin="round" stroke-linecap="round" />
<path d="M1545.0 1085.0 C1545.0 1085.0 1553.3 1077.2 1560.0 1075.0 C1566.7 1072.8 1585.0 1072.0 1585.0 1072.0" fill="none" stroke="#363636" stroke-width="1.1" stroke-linejoin="round" stroke-linecap="round" />
<path d="M1555.0 1098.0 C1555.0 1098.0 1567.5 1089.7 1575.0 1088.0 C1582.5 1086.3 1600.0 1088.0 1600.0 1088.0" fill="none" stroke="#363636" stroke-width="1.1" stroke-linejoin="round" stroke-linecap="round" />
<path d="M1570.0 1115.0 C1570.0 1115.0 1579.5 1107.0 1585.0 1105.0 C1590.5 1103.0 1603.0 1103.0 1603.0 1103.0" fill="none" stroke="#363636" stroke-width="1.1" stroke-linejoin="round" stroke-linecap="round" />
<path d="M1368.7 1125.0 C1364.8 1114.3 1379.0 1097.8 1385.0 1090.0 C1391.0 1082.2 1405.0 1078.0 1405.0 1078.0 C1405.0 1078.0 1427.3 1092.0 1440.0 1098.0 C1452.7 1104.0 1473.5 1105.3 1481.0 1114.0 C1488.5 1122.7 1486.2 1139.7 1485.0 1150.0 C1483.8 1160.3 1481.2 1172.7 1473.7 1175.7 C1466.2 1178.7 1450.9 1171.6 1440.0 1168.0 C1429.1 1164.4 1420.4 1161.2 1408.5 1154.0 C1396.6 1146.8 1372.6 1135.7 1368.7 1125.0Z" fill="#e3e1cb" stroke="#363636" stroke-width="1.4" stroke-linejoin="round" stroke-linecap="round" />
<path d="M1397.7 1146.7 C1397.7 1146.7 1428.0 1130.7 1440.0 1125.0 C1452.0 1119.3 1470.0 1112.4 1470.0 1112.4 C1470.0 1112.4 1499.0 1143.0 1499.0 1143.0 C1499.0 1143.0 1529.9 1138.6 1545.0 1135.0 C1560.1 1131.4 1589.5 1121.4 1589.5 1121.4 C1589.5 1121.4 1575.0 1175.7 1575.0 1175.7 C1575.0 1175.7 1593.8 1219.5 1600.0 1240.0 C1606.2 1260.5 1611.2 1282.3 1612.0 1299.0 C1612.8 1315.7 1608.8 1331.7 1605.0 1340.0 C1601.2 1348.3 1601.5 1347.3 1589.0 1349.0 C1576.5 1350.7 1546.5 1346.7 1530.0 1350.0 C1513.5 1353.3 1505.0 1367.3 1490.0 1369.0 C1475.0 1370.7 1456.6 1367.9 1440.0 1360.0 C1423.4 1352.1 1390.4 1321.8 1390.4 1321.8 C1390.4 1321.8 1399.7 1273.4 1405.0 1250.0 C1410.3 1226.6 1422.0 1181.6 1422.0 1181.6 C1422.0 1181.6 1397.7 1146.7 1397.7 1146.7Z" fill="#5d5a02" stroke="#363636" stroke-width="1.5" stroke-linejoin="round" stroke-linecap="round" />
<path d="M1422.0 1181.6 C1422.0 1181.6 1474.5 1180.0 1500.0 1179.0 C1525.5 1178.0 1575.0 1175.7 1575.0 1175.7" fill="none" stroke="#4a4a20" stroke-width="3" stroke-linejoin="round" stroke-linecap="round" />
<path d="M1397.7 1146.7 C1397.7 1146.7 1453.1 1160.6 1470.0 1160.0 C1486.9 1159.4 1499.0 1143.0 1499.0 1143.0" fill="none" stroke="#56532a" stroke-width="5" stroke-linejoin="round" stroke-linecap="round" />
<path d="M1560.8 470.0 C1560.8 470.0 1582.5 498.5 1590.0 506.0 C1597.5 513.5 1605.6 515.0 1605.6 515.0 C1605.6 515.0 1609.5 536.4 1610.8 547.5 C1612.1 558.6 1612.2 568.5 1613.5 581.7 C1614.8 594.9 1615.6 613.3 1618.7 626.5 C1621.8 639.7 1626.6 652.4 1631.9 660.8 C1637.2 669.1 1643.8 675.3 1650.4 676.6 C1657.0 677.9 1665.7 674.4 1671.4 668.7 C1677.1 663.0 1681.5 653.7 1684.6 642.3 C1687.7 630.9 1688.6 616.0 1689.9 600.2 C1691.2 584.4 1691.6 563.8 1692.5 547.5 C1693.4 531.2 1695.2 502.7 1695.2 502.7 C1695.2 502.7 1717.1 545.7 1729.4 560.6 C1741.7 575.5 1760.2 585.7 1769.0 592.3 C1777.8 598.9 1782.0 600.0 1782.0 600.0 C1782.0 600.0 1779.9 626.9 1774.2 639.7 C1768.5 652.5 1761.8 665.6 1747.8 676.6 C1733.8 687.6 1706.1 699.5 1689.9 705.6 C1673.7 711.8 1668.0 716.6 1650.4 713.5 C1632.8 710.4 1599.0 694.6 1584.5 687.1 C1570.0 679.6 1569.6 678.8 1563.4 668.7 C1557.2 658.6 1552.0 642.3 1547.6 626.5 C1543.2 610.7 1538.5 591.4 1537.0 573.8 C1535.5 556.2 1536.6 535.1 1538.4 521.1 C1540.2 507.1 1543.9 498.0 1547.6 489.5 C1551.3 481.0 1560.8 470.0 1560.8 470.0Z" fill="#e3e1cb" stroke="none" stroke-width="2" stroke-linejoin="round" stroke-linecap="round" />
<path d="M1782.0 600.0 C1782.0 600.0 1779.9 626.9 1774.2 639.7 C1768.5 652.5 1761.8 665.6 1747.8 676.6 C1733.8 687.6 1706.1 699.5 1689.9 705.6 C1673.7 711.8 1668.0 716.6 1650.4 713.5 C1632.8 710.4 1599.0 694.6 1584.5 687.1 C1570.0 679.6 1569.6 678.8 1563.4 668.7 C1557.2 658.6 1552.0 642.3 1547.6 626.5 C1543.2 610.7 1538.5 591.4 1537.0 573.8 C1535.5 556.2 1536.6 535.1 1538.4 521.1 C1540.2 507.1 1543.9 498.3 1547.6 489.5 C1551.3 480.7 1560.8 468.4 1560.8 468.4" fill="none" stroke="#363636" stroke-width="1.5" stroke-linejoin="round" stroke-linecap="round" />
<path d="M1558.1 670.0 C1558.1 670.0 1515.1 669.3 1497.5 663.4 C1479.9 657.5 1462.8 642.1 1452.7 634.4 C1442.6 626.7 1436.9 617.3 1436.9 617.3 C1436.9 617.3 1456.2 618.9 1465.9 616.0 C1475.6 613.1 1487.9 606.4 1494.9 600.2 C1501.9 594.0 1508.0 579.0 1508.0 579.0 C1508.0 579.0 1490.4 576.5 1479.0 571.2 C1467.6 566.0 1448.3 557.0 1439.5 547.5 C1430.7 538.0 1426.4 514.5 1426.4 514.5 C1426.4 514.5 1446.0 518.0 1446.0 518.0 C1446.0 518.0 1439.2 509.3 1437.0 505.0 C1434.8 500.7 1433.0 492.1 1433.0 492.1 C1433.0 492.1 1455.5 500.9 1468.5 500.0 C1481.5 499.1 1498.8 496.6 1510.7 486.9 C1522.6 477.2 1527.4 457.4 1539.7 442.0 C1552.0 426.6 1569.6 407.1 1584.5 394.6 C1599.4 382.1 1613.9 371.4 1629.3 367.0 C1644.7 362.6 1657.8 363.2 1676.7 368.3 C1695.6 373.4 1726.3 388.1 1742.6 397.3 C1758.8 406.5 1765.8 414.4 1774.2 423.6 C1782.6 432.8 1782.6 446.5 1792.7 452.6 C1802.8 458.8 1819.0 461.8 1834.8 460.5 C1850.6 459.2 1887.5 444.7 1887.5 444.7 C1887.5 444.7 1866.5 485.5 1866.5 485.5 C1866.5 485.5 1906.0 479.0 1906.0 479.0 C1906.0 479.0 1911.8 486.9 1910.0 494.8 C1908.2 502.7 1903.1 515.0 1895.4 526.4 C1887.7 537.8 1873.9 553.6 1863.8 563.3 C1853.7 573.0 1834.8 584.4 1834.8 584.4 C1834.8 584.4 1860.8 591.0 1874.4 592.3 C1888.0 593.6 1916.5 592.3 1916.5 592.3 C1916.5 592.3 1909.9 599.7 1900.7 602.8 C1891.5 605.9 1876.6 610.2 1861.2 610.7 C1845.8 611.2 1823.9 608.6 1808.5 605.5 C1793.1 602.4 1782.2 599.8 1769.0 592.3 C1755.8 584.8 1741.7 575.5 1729.4 560.6 C1717.1 545.7 1695.2 502.7 1695.2 502.7" fill="none" stroke="#363636" stroke-width="1.5" stroke-linejoin="round" stroke-linecap="round" />
<path d="M1558.0 431.0 C1558.0 431.0 1554.7 457.7 1560.0 470.0 C1565.3 482.3 1582.4 497.5 1590.0 505.0 C1597.6 512.5 1602.1 507.9 1605.6 515.0 C1609.1 522.1 1609.5 536.4 1610.8 547.5 C1612.1 558.6 1612.2 568.5 1613.5 581.7 C1614.8 594.9 1615.6 613.3 1618.7 626.5 C1621.8 639.7 1626.6 652.4 1631.9 660.8 C1637.2 669.1 1650.4 676.6 1650.4 676.6" fill="none" stroke="#363636" stroke-width="1.3" stroke-linejoin="round" stroke-linecap="round" />
<path d="M1696.0 424.0 C1696.0 424.0 1689.0 440.7 1688.0 450.0 C1687.0 459.3 1688.8 471.2 1690.0 480.0 C1691.2 488.8 1694.6 491.4 1695.0 502.7 C1695.4 514.0 1693.3 531.2 1692.5 547.5 C1691.7 563.8 1691.2 584.4 1689.9 600.2 C1688.6 616.0 1687.7 630.9 1684.6 642.3 C1681.5 653.7 1671.4 668.7 1671.4 668.7" fill="none" stroke="#363636" stroke-width="1.3" stroke-linejoin="round" stroke-linecap="round" />
<path d="M1730.0 413.0 C1730.0 413.0 1750.0 427.7 1760.0 434.0 C1770.0 440.3 1790.0 451.0 1790.0 451.0" fill="none" stroke="#363636" stroke-width="1.3" stroke-linejoin="round" stroke-linecap="round" />
<path d="M1604.0 490.0 C1604.0 490.0 1605.6 520.0 1605.6 520.0" fill="none" stroke="#363636" stroke-width="1.3" stroke-linejoin="round" stroke-linecap="round" />
<path d="M1712.0 463.0 C1712.0 463.0 1702.8 483.8 1700.0 490.0 C1697.2 496.2 1695.0 500.0 1695.0 500.0" fill="none" stroke="#363636" stroke-width="1.3" stroke-linejoin="round" stroke-linecap="round" />
<path d="M1613.0 545.0 C1613.0 545.0 1633.5 565.8 1640.0 570.0 C1646.5 574.2 1652.0 570.0 1652.0 570.0" fill="none" stroke="#363636" stroke-width="1.3" stroke-linejoin="round" stroke-linecap="round" />
<path d="M1614.0 590.0 C1614.0 590.0 1633.3 605.0 1640.0 610.0 C1646.7 615.0 1654.0 620.0 1654.0 620.0" fill="none" stroke="#363636" stroke-width="1.3" stroke-linejoin="round" stroke-linecap="round" />
<path d="M1620.0 633.0 C1620.0 633.0 1634.0 646.3 1640.0 650.0 C1646.0 653.7 1656.0 655.0 1656.0 655.0" fill="none" stroke="#363636" stroke-width="1.3" stroke-linejoin="round" stroke-linecap="round" />
<path d="M1693.0 557.0 C1693.0 557.0 1684.2 567.8 1680.0 568.0 C1675.8 568.2 1668.0 558.0 1668.0 558.0" fill="none" stroke="#363636" stroke-width="1.3" stroke-linejoin="round" stroke-linecap="round" />
<path d="M1692.0 575.0 C1692.0 575.0 1683.5 586.7 1680.0 590.0 C1676.5 593.3 1671.0 595.0 1671.0 595.0" fill="none" stroke="#363636" stroke-width="1.3" stroke-linejoin="round" stroke-linecap="round" />
<path d="M1686.0 626.0 C1686.0 626.0 1678.8 632.7 1675.0 635.0 C1671.2 637.3 1663.0 640.0 1663.0 640.0" fill="none" stroke="#363636" stroke-width="1.3" stroke-linejoin="round" stroke-linecap="round" />
<path d="M1437.0 505.0 C1437.0 505.0 1443.5 515.0 1450.0 520.0 C1456.5 525.0 1476.0 535.0 1476.0 535.0" fill="none" stroke="#363636" stroke-width="1.3" stroke-linejoin="round" stroke-linecap="round" />
<path d="M1830.0 585.0 C1830.0 585.0 1843.3 579.2 1850.0 580.0 C1856.7 580.8 1870.0 590.0 1870.0 590.0" fill="none" stroke="#363636" stroke-width="1.3" stroke-linejoin="round" stroke-linecap="round" />
<path d="M1548.0 592.0 C1548.0 588.3 1553.8 584.0 1560.0 582.0 C1566.2 580.0 1578.3 579.5 1585.0 580.0 C1591.7 580.5 1597.8 581.7 1600.0 585.0 C1602.2 588.3 1601.3 596.3 1598.0 600.0 C1594.7 603.7 1586.3 606.3 1580.0 607.0 C1573.7 607.7 1565.3 606.5 1560.0 604.0 C1554.7 601.5 1548.0 595.7 1548.0 592.0Z" fill="#fafafa" stroke="#363636" stroke-width="1.3" stroke-linejoin="round" stroke-linecap="round" />
<circle cx="1576.6" cy="598" r="10" fill="#fafafa" stroke="#363636" stroke-width="1.2"/>
<path d="M1546.0 566.0 C1546.0 566.0 1561.5 560.7 1570.0 560.0 C1578.5 559.3 1597.0 562.0 1597.0 562.0" fill="none" stroke="#363636" stroke-width="3" stroke-linejoin="round" stroke-linecap="round" />
<path d="M1548.0 585.0 C1548.0 585.0 1567.0 579.2 1575.0 578.0 C1583.0 576.8 1596.0 578.0 1596.0 578.0" fill="none" stroke="#363636" stroke-width="1.5" stroke-linejoin="round" stroke-linecap="round" />
<path d="M1612.0 625.0 C1612.0 625.0 1613.0 636.0 1613.0 636.0" fill="none" stroke="#363636" stroke-width="2" stroke-linejoin="round" stroke-linecap="round" />
<path d="M1628.0 684.0 C1629.7 682.0 1641.3 675.7 1645.0 676.0 C1648.7 676.3 1651.7 684.0 1650.0 686.0 C1648.3 688.0 1638.7 688.3 1635.0 688.0 C1631.3 687.7 1626.3 686.0 1628.0 684.0Z" fill="#f4f4f4" stroke="#363636" stroke-width="1.1" stroke-linejoin="round" stroke-linecap="round" />
<path d="M1677.0 674.0 C1679.0 672.5 1688.5 674.7 1692.0 676.0 C1695.5 677.3 1700.0 680.5 1698.0 682.0 C1696.0 683.5 1683.5 686.3 1680.0 685.0 C1676.5 683.7 1675.0 675.5 1677.0 674.0Z" fill="#f4f4f4" stroke="#363636" stroke-width="1.1" stroke-linejoin="round" stroke-linecap="round" />
<path d="M1647.7 681.0 L1675.0 674.0 L1679.3 711.0 L1654.0 715.0Z" fill="#a8a870" stroke="#363636" stroke-width="1.2" stroke-linejoin="round" stroke-linecap="round" />
<path d="M1655.0 688.0 C1655.0 688.0 1664.8 682.0 1668.0 684.0 C1671.2 686.0 1675.0 695.7 1674.0 700.0 C1673.0 704.3 1662.0 710.0 1662.0 710.0" fill="none" stroke="#5d6e3a" stroke-width="2.5" stroke-linejoin="round" stroke-linecap="round" />
<path d="M1652.0 700.0 C1652.0 700.0 1657.3 694.2 1660.0 695.0 C1662.7 695.8 1668.0 705.0 1668.0 705.0" fill="none" stroke="#d7dc9a" stroke-width="2" stroke-linejoin="round" stroke-linecap="round" />
<path d="M1656.0 716.0 C1659.5 712.0 1670.5 712.0 1675.0 716.0 C1679.5 720.0 1682.8 732.7 1683.0 740.0 C1683.2 747.3 1675.8 752.5 1676.0 760.0 C1676.2 767.5 1683.7 777.5 1684.0 785.0 C1684.3 792.5 1680.2 799.8 1678.0 805.0 C1675.8 810.2 1671.0 816.0 1671.0 816.0 C1671.0 816.0 1662.8 806.0 1660.0 800.0 C1657.2 794.0 1654.0 786.7 1654.0 780.0 C1654.0 773.3 1660.0 766.7 1660.0 760.0 C1660.0 753.3 1654.7 747.3 1654.0 740.0 C1653.3 732.7 1652.5 720.0 1656.0 716.0Z" fill="#a8a8a8" stroke="#363636" stroke-width="1.2" stroke-linejoin="round" stroke-linecap="round" />
<path d="M2252.5 1107.6 L2153.0 1288.4" fill="none" stroke="#f5f5f5" stroke-width="4" stroke-linejoin="round" stroke-linecap="round" />
<path d="M2252.5 1107.6 L2153.0 1288.4" fill="none" stroke="#555" stroke-width="1.2" stroke-linejoin="round" stroke-linecap="round" />
<path d="M674.8 1335.0 C674.8 1335.0 755.4 1341.7 790.0 1340.0 C824.6 1338.3 882.7 1325.0 882.7 1325.0 C882.7 1325.0 837.0 1527.0 837.0 1527.0 C837.0 1527.0 670.6 1527.0 670.6 1527.0 C670.6 1527.0 671.3 1462.0 672.0 1430.0 C672.7 1398.0 674.8 1335.0 674.8 1335.0Z" fill="#f7f7ed" stroke="#363636" stroke-width="1.6" stroke-linejoin="round" stroke-linecap="round" />
<path d="M787.0 1358.0 C787.0 1358.0 776.5 1411.8 772.0 1440.0 C767.5 1468.2 760.0 1527.0 760.0 1527.0" fill="none" stroke="#363636" stroke-width="1.4" stroke-linejoin="round" stroke-linecap="round" />
<path d="M614.7 873.8 C616.4 877.1 617.0 892.4 618.0 900.0 C619.0 907.6 622.1 913.4 620.8 919.2 C619.5 925.0 614.0 931.0 610.0 935.0 C606.0 939.0 596.5 943.4 596.5 943.4 C596.5 943.4 610.1 925.6 612.0 915.0 C613.9 904.4 607.5 886.9 608.0 880.0 C608.5 873.1 613.0 870.5 614.7 873.8Z" fill="#b3c3e8" stroke="#363636" stroke-width="1.3" stroke-linejoin="round" stroke-linecap="round" />
<path d="M560.0 852.0 C560.0 852.0 552.0 870.3 550.0 880.0 C548.0 889.7 547.3 897.8 548.0 910.0 C548.7 922.2 554.0 953.0 554.0 953.0" fill="none" stroke="#363636" stroke-width="1.3" stroke-linejoin="round" stroke-linecap="round" />
<path d="M431.5 523.9 C431.5 523.9 432.7 537.9 436.0 549.7 C439.3 561.6 445.4 579.6 451.2 595.0 C457.0 610.4 470.8 642.0 470.8 642.0 C470.8 642.0 478.6 639.8 487.5 639.0 C496.4 638.2 511.8 637.0 523.9 637.5 C536.0 638.0 549.6 640.8 560.2 642.0 C570.8 643.2 587.5 645.0 587.5 645.0 C587.5 645.0 593.5 719.3 593.5 719.3 C593.5 719.3 559.7 720.3 542.0 720.8 C524.3 721.3 502.6 723.6 487.5 722.3 C472.4 721.0 460.0 718.2 451.2 713.2 C442.4 708.2 437.6 699.6 434.5 692.0 C431.4 684.4 432.9 683.0 432.4 667.8 C431.9 652.6 431.6 625.0 431.5 601.0 C431.4 577.0 431.5 523.9 431.5 523.9Z" fill="#52806a" stroke="#363636" stroke-width="1.5" stroke-linejoin="round" stroke-linecap="round" />
<path d="M433.0 545.0 C433.0 545.0 445.5 583.6 452.0 600.0 C458.5 616.4 472.0 643.6 472.0 643.6 C472.0 643.6 457.3 659.3 452.0 652.0 C446.7 644.7 443.2 617.8 440.0 600.0 C436.8 582.2 433.0 545.0 433.0 545.0Z" fill="#2b4e3b" stroke="none" stroke-width="2" stroke-linejoin="round" stroke-linecap="round" />
<path d="M548.0 637.0 C548.0 637.0 534.2 641.2 530.0 650.0 C525.8 658.8 523.5 678.8 523.0 690.0 C522.5 701.2 527.0 717.0 527.0 717.0" fill="none" stroke="#2b4e3b" stroke-width="3.5" stroke-linejoin="round" stroke-linecap="round" />
<path d="M851.0 613.3 C851.0 613.3 856.5 618.9 863.0 622.4 C869.5 625.9 880.7 629.0 890.3 634.5 C899.9 640.0 920.6 655.7 920.6 655.7 C920.6 655.7 925.2 650.7 923.7 643.6 C922.2 636.5 917.1 623.9 911.5 613.3 C905.9 602.7 896.3 592.1 890.3 580.0 C884.2 567.9 878.0 554.2 875.2 540.6 C872.4 527.0 873.7 498.2 873.7 498.2 C873.7 498.2 875.4 525.4 879.7 537.5 C884.0 549.6 890.6 558.3 899.4 570.9 C908.2 583.5 923.6 600.7 932.7 613.3 C941.8 625.9 949.2 636.0 954.0 646.6 C958.8 657.2 961.0 666.3 961.5 676.9 C962.0 687.5 961.3 703.6 957.0 710.2 C952.7 716.8 942.9 715.8 935.8 716.3 C928.7 716.8 921.2 712.2 914.6 713.2 C908.0 714.2 905.0 721.3 896.4 722.3 C887.8 723.3 863.0 719.3 863.0 719.3 C863.0 719.3 851.0 613.3 851.0 613.3Z" fill="#52806a" stroke="#363636" stroke-width="1.5" stroke-linejoin="round" stroke-linecap="round" />
<path d="M876.0 537.0 C876.0 537.0 884.2 567.3 890.0 580.0 C895.8 592.7 905.4 602.5 911.0 613.0 C916.6 623.5 919.5 633.2 923.7 643.0 C927.9 652.8 934.6 664.5 936.0 672.0 C937.4 679.5 932.0 688.0 932.0 688.0 C932.0 688.0 918.0 692.0 918.0 692.0 C918.0 692.0 924.2 676.2 922.0 665.0 C919.8 653.8 910.7 637.5 905.0 625.0 C899.3 612.5 892.3 601.7 888.0 590.0 C883.7 578.3 881.0 563.8 879.0 555.0 C877.0 546.2 876.0 537.0 876.0 537.0Z" fill="#2b4e3b" stroke="none" stroke-width="2" stroke-linejoin="round" stroke-linecap="round" />
<path d="M587.5 645.0 C587.5 645.0 617.8 629.7 632.9 622.4 C648.0 615.1 661.6 606.3 678.3 601.2 C694.9 596.1 714.2 593.9 732.8 592.0 C751.4 590.1 774.4 587.5 790.0 590.0 C805.6 592.5 816.5 603.3 826.7 607.2 C836.9 611.1 851.0 613.3 851.0 613.3 C851.0 613.3 863.0 719.3 863.0 719.3 C863.0 719.3 832.8 703.5 814.6 698.0 C796.4 692.5 776.7 686.0 754.0 686.0 C731.3 686.0 703.5 690.4 678.3 698.0 C653.1 705.6 602.6 731.4 602.6 731.4 C602.6 731.4 593.5 719.3 593.5 719.3 C593.5 719.3 587.5 645.0 587.5 645.0Z" fill="#52806a" stroke="#363636" stroke-width="1.5" stroke-linejoin="round" stroke-linecap="round" />
<ellipse cx="779" cy="604" rx="47" ry="47" fill="#9b96a2" stroke="#363636" stroke-width="1.4" transform="rotate(-25 779 604)"/>
<path d="M591.0 667.0 C591.0 667.0 608.5 655.8 620.0 650.0 C631.5 644.2 645.8 637.5 660.0 632.0 C674.2 626.5 705.0 617.0 705.0 617.0" fill="none" stroke="#2b4e3b" stroke-width="3" stroke-linejoin="round" stroke-linecap="round" />
<ellipse cx="707" cy="616.5" rx="12" ry="8" fill="#6cbf96" stroke="#2b4e3b" stroke-width="2.5"/>
<ellipse cx="637.4" cy="645" rx="8" ry="6.5" fill="#6cbf96" stroke="#2b4e3b" stroke-width="2.5"/>
<ellipse cx="842" cy="634.5" rx="10" ry="6.5" fill="#6cbf96" stroke="#2b4e3b" stroke-width="2.5"/>
<path d="M602.6 731.4 C594.2 744.4 599.6 766.9 599.6 783.0 C599.6 799.1 599.1 814.7 602.6 828.3 C606.1 841.9 610.7 854.1 620.8 864.7 C630.9 875.3 646.0 885.0 663.2 892.0 C680.4 899.0 706.6 905.0 723.8 907.0 C741.0 909.0 760.2 907.7 766.2 904.0 C772.2 900.3 764.0 895.1 760.0 885.0 C756.0 874.9 751.6 858.0 742.0 843.5 C732.4 829.0 709.7 810.6 702.6 798.0 C695.5 785.4 696.0 781.3 699.5 767.7 C703.0 754.1 713.7 730.2 723.8 716.3 C733.9 702.3 764.0 688.4 760.0 684.0 C756.0 679.6 718.3 686.5 700.0 690.0 C681.7 693.5 666.2 698.1 650.0 705.0 C633.8 711.9 611.0 718.4 602.6 731.4Z" fill="#b3c3e8" stroke="#363636" stroke-width="1.5" stroke-linejoin="round" stroke-linecap="round" />
<path d="M805.5 690.0 C811.6 693.0 834.4 709.3 845.0 722.3 C855.6 735.2 863.0 750.0 869.0 767.7 C875.0 785.4 880.8 810.6 881.3 828.3 C881.8 846.0 878.2 865.2 872.2 873.8 C866.2 882.4 849.5 885.0 845.0 880.0 C840.5 875.0 845.5 859.7 845.0 843.5 C844.5 827.3 844.9 800.6 841.9 782.9 C838.9 765.2 832.2 750.6 826.7 737.5 C821.2 724.4 812.1 711.9 808.6 704.0 C805.1 696.1 799.4 687.0 805.5 690.0Z" fill="#b3c3e8" stroke="#363636" stroke-width="1.4" stroke-linejoin="round" stroke-linecap="round" />
<path d="M760.0 684.0 C774.1 681.0 797.5 689.1 808.6 698.0 C819.7 706.9 820.6 723.3 826.7 737.5 C832.8 751.7 841.5 768.9 845.0 783.0 C848.5 797.1 850.5 811.2 848.0 822.3 C845.5 833.4 839.4 843.5 829.8 849.5 C820.2 855.5 805.5 859.6 790.4 858.6 C775.3 857.6 752.6 851.1 739.0 843.5 C725.4 835.9 715.2 825.8 708.6 813.2 C702.0 800.6 697.0 783.9 699.5 767.7 C702.0 751.6 713.7 730.2 723.8 716.3 C733.9 702.3 745.9 687.0 760.0 684.0Z" fill="#f7f7ed" stroke="#363636" stroke-width="1.5" stroke-linejoin="round" stroke-linecap="round" />
<path d="M758.0 848.0 L758.0 882.0 L798.0 882.0 L798.0 856.0Z" fill="#f7f7ed" stroke="none" stroke-width="2" stroke-linejoin="round" stroke-linecap="round" />
<path d="M759.0 852.0 C759.0 852.0 798.0 858.0 798.0 858.0 C798.0 858.0 800.0 871.0 797.0 873.0 C794.0 875.0 785.3 871.8 780.0 870.0 C774.7 868.2 768.5 865.0 765.0 862.0 C761.5 859.0 759.0 852.0 759.0 852.0Z" fill="#6f7a92" stroke="none" stroke-width="2" stroke-linejoin="round" stroke-linecap="round" />
<path d="M758.5 852.0 L758.5 880.0" fill="none" stroke="#363636" stroke-width="1.6" stroke-linejoin="round" stroke-linecap="round" />
<path d="M798.0 862.0 L798.0 879.0" fill="none" stroke="#363636" stroke-width="1.3" stroke-linejoin="round" stroke-linecap="round" />
<path d="M729.8 713.2 C714.6 721.3 658.1 753.1 632.9 770.8 C607.7 788.5 590.5 805.6 578.4 819.2 C566.3 832.8 560.2 852.6 560.2 852.6 C560.2 852.6 562.2 846.5 569.3 837.4 C576.4 828.3 587.0 812.1 602.6 798.0 C618.2 783.9 643.0 765.2 663.2 752.6 C683.4 740.0 712.7 728.9 723.8 722.3 C734.9 715.7 744.9 705.1 729.8 713.2Z" fill="#c9d7f7" stroke="#363636" stroke-width="1.3" stroke-linejoin="round" stroke-linecap="round" />
<path d="M630.0 770.0 C630.0 770.0 621.7 805.0 625.0 820.0 C628.3 835.0 637.5 848.3 650.0 860.0 C662.5 871.7 684.2 883.3 700.0 890.0 C715.8 896.7 745.0 900.0 745.0 900.0" fill="none" stroke="#363636" stroke-width="1.2" stroke-linejoin="round" stroke-linecap="round" />
<path d="M660.0 745.0 C660.0 745.0 645.5 782.5 648.0 800.0 C650.5 817.5 663.0 836.7 675.0 850.0 C687.0 863.3 720.0 880.0 720.0 880.0" fill="none" stroke="#363636" stroke-width="1.2" stroke-linejoin="round" stroke-linecap="round" />
<path d="M690.0 722.0 C690.0 722.0 672.0 752.0 672.0 770.0 C672.0 788.0 680.3 813.7 690.0 830.0 C699.7 846.3 730.0 868.0 730.0 868.0" fill="none" stroke="#363636" stroke-width="1.2" stroke-linejoin="round" stroke-linecap="round" />
<path d="M850.0 740.0 C850.0 740.0 858.3 780.0 860.0 800.0 C861.7 820.0 860.0 860.0 860.0 860.0" fill="none" stroke="#363636" stroke-width="1.2" stroke-linejoin="round" stroke-linecap="round" />
<path d="M672.0 712.0 C672.0 712.0 686.2 702.5 690.0 700.0 C693.8 697.5 695.0 697.0 695.0 697.0" fill="none" stroke="#363636" stroke-width="1.2" stroke-linejoin="round" stroke-linecap="round" />
<path d="M746.0 791.0 C746.0 788.3 751.0 783.5 755.0 781.0 C759.0 778.5 765.8 776.5 770.0 776.0 C774.2 775.5 778.7 775.3 780.0 778.0 C781.3 780.7 780.0 788.8 778.0 792.0 C776.0 795.2 771.8 796.2 768.0 797.0 C764.2 797.8 758.7 798.0 755.0 797.0 C751.3 796.0 746.0 793.7 746.0 791.0Z" fill="#f6f6f2" stroke="none" stroke-width="2" stroke-linejoin="round" stroke-linecap="round" />
<circle cx="764.4" cy="786.6" r="8.5" fill="#ececec" stroke="#363636" stroke-width="1"/>
<path d="M744.5 790.3 C744.5 790.3 752.2 782.4 758.0 780.0 C763.8 777.6 779.0 775.8 779.0 775.8" fill="none" stroke="#363636" stroke-width="1.5" stroke-linejoin="round" stroke-linecap="round" />
<path d="M755.4 797.5 C755.4 797.5 769.9 797.5 769.9 797.5" fill="none" stroke="#363636" stroke-width="1.3" stroke-linejoin="round" stroke-linecap="round" />
<path d="M753.6 772.2 C753.6 772.2 760.6 769.6 765.0 769.0 C769.4 768.4 779.8 768.5 779.8 768.5" fill="none" stroke="#363636" stroke-width="1.2" stroke-linejoin="round" stroke-linecap="round" />
<path d="M829.5 776.0 C831.2 773.3 836.7 773.7 840.0 774.0 C843.3 774.3 848.2 775.3 849.5 778.0 C850.8 780.7 849.9 787.3 848.0 790.0 C846.1 792.7 841.0 794.0 838.0 794.0 C835.0 794.0 831.4 793.0 830.0 790.0 C828.6 787.0 827.8 778.7 829.5 776.0Z" fill="#f6f6f2" stroke="none" stroke-width="2" stroke-linejoin="round" stroke-linecap="round" />
<circle cx="836.8" cy="784.8" r="6.5" fill="#ececec" stroke="#363636" stroke-width="1"/>
<path d="M829.5 776.0 C829.5 776.0 836.7 773.5 840.0 774.0 C843.3 774.5 849.5 779.0 849.5 779.0" fill="none" stroke="#363636" stroke-width="1.4" stroke-linejoin="round" stroke-linecap="round" />
<path d="M831.0 794.0 C831.0 794.0 848.0 793.0 848.0 793.0" fill="none" stroke="#363636" stroke-width="1.3" stroke-linejoin="round" stroke-linecap="round" />
<path d="M827.8 760.0 C827.8 760.0 836.8 759.5 836.8 759.5" fill="none" stroke="#363636" stroke-width="2" stroke-linejoin="round" stroke-linecap="round" />
<path d="M733.7 757.7 C733.7 757.7 750.6 750.4 759.0 750.5 C767.4 750.6 784.3 758.6 784.3 758.6" fill="none" stroke="#363636" stroke-width="2.6" stroke-linejoin="round" stroke-linecap="round" />
<path d="M823.0 778.0 C823.0 778.0 824.2 790.0 825.0 795.0 C825.8 800.0 827.8 808.0 827.8 808.0" fill="none" stroke="#59637e" stroke-width="3" stroke-linejoin="round" stroke-linecap="round" />
<path d="M801.0 837.0 C801.0 837.0 815.0 829.0 815.0 829.0" fill="none" stroke="#363636" stroke-width="1.2" stroke-linejoin="round" stroke-linecap="round" />
<path d="M757.0 877.0 L842.2 875.0 L860.0 897.0 L840.4 926.0 L790.0 971.0 L700.0 930.0 L662.0 905.0 L700.0 910.0 L724.0 911.0 L768.0 906.0Z" fill="#f7f7ed" stroke="none" stroke-width="2" stroke-linejoin="round" stroke-linecap="round" />
<path d="M641.0 910.0 C649.1 899.9 647.5 904.8 651.0 904.0 C654.5 903.2 662.0 905.0 662.0 905.0 C662.0 905.0 790.4 970.9 790.4 970.9 C790.4 970.9 860.0 897.0 860.0 897.0 C860.0 897.0 936.8 927.1 955.0 934.8 C973.2 942.5 969.0 943.0 969.0 943.0 C969.0 943.0 969.0 985.0 969.0 985.0 C969.0 985.0 941.1 1022.3 921.3 1034.5 C901.5 1046.7 850.4 1058.0 850.4 1058.0 C850.4 1058.0 869.6 1050.0 875.2 1055.7 C880.9 1061.4 884.3 1092.0 884.3 1092.0 C884.3 1092.0 820.7 1125.4 790.4 1126.9 C760.1 1128.4 702.6 1101.0 702.6 1101.0 C702.6 1101.0 699.5 1086.0 699.5 1086.0 C699.5 1086.0 735.9 1072.3 735.9 1072.3 C735.9 1072.3 699.7 1080.8 680.0 1080.0 C660.3 1079.2 638.7 1075.9 617.7 1067.8 C596.7 1059.7 554.1 1031.4 554.1 1031.4 C554.1 1031.4 588.1 985.0 602.6 964.8 C617.1 944.6 632.9 920.1 641.0 910.0Z" fill="#f6f6f6" stroke="#363636" stroke-width="1.5" stroke-linejoin="round" stroke-linecap="round" />
<path d="M722.8 936.8 C722.8 936.8 748.4 924.1 768.0 922.3 C787.6 920.5 840.4 926.0 840.4 926.0 C840.4 926.0 790.4 970.9 790.4 970.9 C790.4 970.9 722.8 936.8 722.8 936.8Z" fill="#afc4bb" stroke="none" stroke-width="2" stroke-linejoin="round" stroke-linecap="round" />
<path d="M668.0 904.0 L730.0 934.0 L722.0 940.0 L664.0 912.0Z" fill="#7f88a0" stroke="none" stroke-width="2" stroke-linejoin="round" stroke-linecap="round" />
<path d="M651.0 904.0 L814.6 977.0 L829.8 1119.3" fill="none" stroke="#363636" stroke-width="1.3" stroke-linejoin="round" stroke-linecap="round" />
<path d="M860.0 898.0 L790.4 970.9" fill="none" stroke="#363636" stroke-width="1.3" stroke-linejoin="round" stroke-linecap="round" />
<path d="M624.9 927.4 C624.9 927.4 636.1 935.9 640.0 940.0 C643.9 944.1 645.4 946.2 648.4 952.0 C651.4 957.8 655.0 965.0 658.0 975.0 C661.0 985.0 666.4 1012.1 666.4 1012.1" fill="none" stroke="#b6c19f" stroke-width="3.6" stroke-linejoin="round" stroke-linecap="round" />
<path d="M623.3 932.9 C623.3 932.9 632.7 939.1 637.0 943.0 C641.3 946.9 649.2 956.4 649.2 956.4" fill="none" stroke="#b6c19f" stroke-width="3.6" stroke-linejoin="round" stroke-linecap="round" />
<path d="M611.5 947.8 C611.5 947.8 620.7 946.6 625.0 946.5 C629.3 946.4 637.4 947.0 637.4 947.0" fill="none" stroke="#b6c19f" stroke-width="3.6" stroke-linejoin="round" stroke-linecap="round" />
<path d="M603.7 956.4 C603.7 956.4 617.5 954.2 625.0 954.0 C632.5 953.8 648.4 954.9 648.4 954.9" fill="none" stroke="#b6c19f" stroke-width="3.6" stroke-linejoin="round" stroke-linecap="round" />
<path d="M588.0 983.1 C588.0 983.1 608.9 982.8 617.0 980.7 C625.1 978.6 631.5 974.7 636.6 970.6 C641.7 966.5 647.6 956.4 647.6 956.4" fill="none" stroke="#b6c19f" stroke-width="3.6" stroke-linejoin="round" stroke-linecap="round" />
<path d="M612.3 996.4 C612.3 996.4 632.0 998.6 637.4 995.6 C642.8 992.6 642.6 984.9 644.5 978.4 C646.4 971.9 649.0 956.4 649.0 956.4" fill="none" stroke="#b6c19f" stroke-width="3.6" stroke-linejoin="round" stroke-linecap="round" />
<path d="M893.0 912.0 C893.0 912.0 893.3 934.0 895.0 945.0 C896.7 956.0 903.0 978.0 903.0 978.0" fill="none" stroke="#b8c3a0" stroke-width="2.4" stroke-linejoin="round" stroke-linecap="round" />
<path d="M896.0 925.0 C896.0 925.0 906.3 918.2 912.0 916.0 C917.7 913.8 930.0 912.0 930.0 912.0" fill="none" stroke="#b8c3a0" stroke-width="2.4" stroke-linejoin="round" stroke-linecap="round" />
<path d="M895.0 938.0 C895.0 938.0 907.5 931.3 915.0 930.0 C922.5 928.7 940.0 930.0 940.0 930.0" fill="none" stroke="#b8c3a0" stroke-width="2.4" stroke-linejoin="round" stroke-linecap="round" />
<path d="M898.0 950.0 C898.0 950.0 909.7 955.3 915.0 955.0 C920.3 954.7 930.0 948.0 930.0 948.0" fill="none" stroke="#b8c3a0" stroke-width="2.4" stroke-linejoin="round" stroke-linecap="round" />
<path d="M897.0 927.0 C897.0 927.0 910.8 935.3 915.0 940.0 C919.2 944.7 922.0 955.0 922.0 955.0" fill="none" stroke="#b8c3a0" stroke-width="2.4" stroke-linejoin="round" stroke-linecap="round" />
<path d="M811.6 695.0 C821.6 701.7 861.1 729.2 880.0 750.0 C898.9 770.8 912.5 797.0 925.0 820.0 C937.5 843.0 950.3 869.7 955.0 888.0 C959.7 906.3 958.9 916.6 953.0 930.0 C947.1 943.4 919.6 968.6 919.6 968.6 C919.6 968.6 935.8 941.1 940.0 928.0 C944.2 914.9 948.7 907.2 945.0 890.0 C941.3 872.8 930.5 846.7 918.0 825.0 C905.5 803.3 886.3 779.2 870.0 760.0 C853.7 740.8 829.7 720.8 820.0 710.0 C810.3 699.2 801.6 688.3 811.6 695.0Z" fill="#c9d7f7" stroke="#363636" stroke-width="1.3" stroke-linejoin="round" stroke-linecap="round" />
<path d="M404.3 943.0 C404.3 943.0 385.1 953.9 379.8 958.0 C374.5 962.1 374.0 962.5 372.4 967.5 C370.8 972.5 370.1 977.2 370.3 987.8 C370.5 998.4 371.4 1021.7 373.7 1031.2 C376.0 1040.7 378.8 1041.0 383.9 1044.8 C389.0 1048.6 389.6 1050.0 404.3 1054.3 C419.0 1058.6 440.4 1064.8 472.0 1070.5 C503.6 1076.2 594.1 1088.2 594.1 1088.2 C594.1 1088.2 613.1 1069.2 613.1 1069.2 C613.1 1069.2 576.1 1050.2 561.6 1046.1 C547.1 1042.0 549.6 1045.7 526.3 1044.8 C503.0 1043.9 421.9 1040.7 421.9 1040.7 C421.9 1040.7 426.6 1014.7 427.3 1004.1 C428.0 993.5 426.0 977.0 426.0 977.0 C426.0 977.0 423.2 978.3 423.2 978.3 C423.2 978.3 407.0 1001.4 407.0 1001.4 C407.0 1001.4 392.0 962.0 392.0 962.0 C392.0 962.0 402.2 950.2 404.3 947.0 C406.4 943.8 404.3 943.0 404.3 943.0Z" fill="#f7f7ed" stroke="#363636" stroke-width="1.6" stroke-linejoin="round" stroke-linecap="round" />
<path d="M379.8 960.0 C379.8 960.0 380.9 987.9 382.0 1000.0 C383.1 1012.1 386.6 1032.6 386.6 1032.6" fill="none" stroke="#363636" stroke-width="1.3" stroke-linejoin="round" stroke-linecap="round" />
<path d="M392.0 963.0 C392.0 963.0 395.5 973.8 398.0 980.0 C400.5 986.2 407.0 1000.0 407.0 1000.0" fill="none" stroke="#363636" stroke-width="2.2" stroke-linejoin="round" stroke-linecap="round" />
<path d="M554.0 1031.0 L617.0 1068.0 L614.0 1072.0 L555.0 1040.0Z" fill="#7f88a0" stroke="none" stroke-width="2" stroke-linejoin="round" stroke-linecap="round" />
<path d="M978.7 946.6 C978.7 946.6 1020.9 954.3 1040.0 958.0 C1059.2 961.7 1093.6 968.6 1093.6 968.6 C1093.6 968.6 1109.1 954.5 1115.0 950.0 C1120.9 945.5 1123.2 943.7 1129.0 941.6 C1134.8 939.5 1144.1 938.4 1150.0 937.5 C1155.9 936.6 1164.5 936.5 1164.5 936.5 C1164.5 936.5 1162.1 942.8 1158.0 945.0 C1153.9 947.2 1140.0 950.0 1140.0 950.0 C1140.0 950.0 1150.5 958.3 1152.0 962.0 C1153.5 965.7 1150.9 968.7 1149.0 972.0 C1147.1 975.3 1147.0 979.2 1140.8 982.0 C1134.6 984.8 1112.0 988.9 1112.0 988.9 C1112.0 988.9 977.0 985.5 977.0 985.5 C977.0 985.5 978.7 946.6 978.7 946.6Z" fill="#f7f7ed" stroke="#363636" stroke-width="1.5" stroke-linejoin="round" stroke-linecap="round" />
<path d="M1130.0 951.0 C1130.0 951.0 1141.7 955.2 1145.0 958.0 C1148.3 960.8 1150.0 968.0 1150.0 968.0" fill="none" stroke="#363636" stroke-width="2.2" stroke-linejoin="round" stroke-linecap="round" />
<path d="M1122.0 968.0 C1122.0 968.0 1131.7 962.8 1135.0 964.0 C1138.3 965.2 1142.0 975.0 1142.0 975.0" fill="none" stroke="#363636" stroke-width="1.6" stroke-linejoin="round" stroke-linecap="round" />
<path d="M1118.0 980.0 C1118.0 980.0 1126.7 975.7 1130.0 976.0 C1133.3 976.3 1138.0 982.0 1138.0 982.0" fill="none" stroke="#363636" stroke-width="1.4" stroke-linejoin="round" stroke-linecap="round" />
<path d="M968.6 943.0 L978.7 946.6 L977.0 985.5 L968.6 985.5Z" fill="#7f88a0" stroke="none" stroke-width="2" stroke-linejoin="round" stroke-linecap="round" />
<path d="M699.5 1101.0 C699.5 1101.0 759.2 1129.0 790.0 1127.0 C820.8 1125.0 884.3 1089.0 884.3 1089.0 C884.3 1089.0 894.0 1116.8 898.0 1140.0 C902.0 1163.2 908.5 1228.0 908.5 1228.0 C908.5 1228.0 869.2 1246.9 850.0 1252.0 C830.8 1257.1 818.0 1258.5 793.4 1258.6 C768.8 1258.7 702.6 1252.5 702.6 1252.5 C702.6 1252.5 694.0 1168.8 693.5 1143.5 C693.0 1118.2 699.5 1101.0 699.5 1101.0Z" fill="#909090" stroke="#363636" stroke-width="1.5" stroke-linejoin="round" stroke-linecap="round" />
<path d="M701.3 1252.0 C701.3 1252.0 759.0 1262.9 793.4 1259.0 C827.8 1255.1 907.4 1228.5 907.4 1228.5 C907.4 1228.5 911.1 1264.9 912.0 1280.0 C912.9 1295.1 913.6 1309.8 912.8 1319.0 C912.0 1328.2 907.4 1335.2 907.4 1335.2 C907.4 1335.2 871.3 1341.8 853.2 1344.2 C835.1 1346.6 799.0 1349.7 799.0 1349.7 C799.0 1349.7 807.4 1351.5 795.3 1353.3 C783.2 1355.1 748.0 1362.0 726.6 1360.5 C705.2 1359.0 667.0 1344.2 667.0 1344.2 C667.0 1344.2 663.8 1322.4 666.0 1310.0 C668.2 1297.6 674.1 1279.7 680.0 1270.0 C685.9 1260.3 701.3 1252.0 701.3 1252.0Z" fill="#f5f5f5" stroke="#363636" stroke-width="1.5" stroke-linejoin="round" stroke-linecap="round" />
<path d="M702.0 1254.0 C702.0 1254.0 759.4 1263.8 793.4 1260.0 C827.4 1256.2 906.0 1231.0 906.0 1231.0 C906.0 1231.0 911.0 1302.6 911.0 1302.6 C911.0 1302.6 871.0 1321.5 853.2 1326.0 C835.4 1330.5 804.3 1329.8 804.3 1329.8 C804.3 1329.8 798.9 1332.5 798.9 1332.5 C798.9 1332.5 765.1 1337.0 750.0 1338.0 C734.9 1339.0 722.0 1342.0 708.5 1338.8 C695.0 1335.6 668.7 1319.0 668.7 1319.0 C668.7 1319.0 666.5 1300.8 672.0 1290.0 C677.5 1279.2 702.0 1254.0 702.0 1254.0Z" fill="#b6bf9b" stroke="none" stroke-width="2" stroke-linejoin="round" stroke-linecap="round" />
<path d="M700.0 1320.0 C700.0 1320.0 712.5 1303.3 720.0 1300.0 C727.5 1296.7 736.7 1295.0 745.0 1300.0 C753.3 1305.0 770.0 1330.0 770.0 1330.0" fill="none" stroke="#d4dac4" stroke-width="1.5" stroke-linejoin="round" stroke-linecap="round" />
<path d="M710.0 1328.0 C710.0 1328.0 723.3 1312.7 730.0 1310.0 C736.7 1307.3 744.2 1307.8 750.0 1312.0 C755.8 1316.2 765.0 1335.0 765.0 1335.0" fill="none" stroke="#d4dac4" stroke-width="1.5" stroke-linejoin="round" stroke-linecap="round" />
<path d="M820.0 1282.0 C820.0 1282.0 832.5 1268.7 840.0 1270.0 C847.5 1271.3 858.3 1281.7 865.0 1290.0 C871.7 1298.3 880.0 1320.0 880.0 1320.0" fill="none" stroke="#d4dac4" stroke-width="1.5" stroke-linejoin="round" stroke-linecap="round" />
<path d="M812.0 1290.0 C812.0 1290.0 827.8 1278.3 835.0 1280.0 C842.2 1281.7 849.5 1292.5 855.0 1300.0 C860.5 1307.5 868.0 1325.0 868.0 1325.0" fill="none" stroke="#d4dac4" stroke-width="1.5" stroke-linejoin="round" stroke-linecap="round" />
<path d="M880.0 1250.0 C880.0 1250.0 891.2 1266.7 895.0 1275.0 C898.8 1283.3 903.0 1300.0 903.0 1300.0" fill="none" stroke="#d4dac4" stroke-width="1.5" stroke-linejoin="round" stroke-linecap="round" />
<path d="M870.0 1252.0 C870.0 1252.0 881.2 1271.2 885.0 1280.0 C888.8 1288.8 893.0 1305.0 893.0 1305.0" fill="none" stroke="#d4dac4" stroke-width="1.5" stroke-linejoin="round" stroke-linecap="round" />
<path d="M806.0 1281.0 C806.0 1281.0 803.9 1301.3 803.0 1310.0 C802.1 1318.7 802.0 1326.2 800.7 1333.4 C799.4 1340.6 795.0 1353.0 795.0 1353.0" fill="none" stroke="#363636" stroke-width="1.4" stroke-linejoin="round" stroke-linecap="round" />
<path d="M670.5 1196.0 C670.5 1196.0 683.2 1196.9 683.2 1196.9 C683.2 1196.9 703.0 1237.5 703.0 1237.5 C703.0 1237.5 699.5 1289.0 699.5 1289.0 C699.5 1289.0 656.0 1309.9 656.0 1309.9 C656.0 1309.9 619.0 1286.4 619.0 1286.4 C619.0 1286.4 626.2 1226.7 626.2 1226.7 C626.2 1226.7 670.5 1196.0 670.5 1196.0Z" fill="#75c29c" stroke="none" stroke-width="2" stroke-linejoin="round" stroke-linecap="round" />
<path d="M676.0 1196.0 C676.0 1196.0 683.2 1196.9 683.2 1196.9 C683.2 1196.9 703.0 1237.5 703.0 1237.5 C703.0 1237.5 699.5 1289.0 699.5 1289.0 C699.5 1289.0 660.0 1308.0 660.0 1308.0 C660.0 1308.0 667.7 1274.7 670.0 1260.0 C672.3 1245.3 673.0 1230.7 674.0 1220.0 C675.0 1209.3 676.0 1196.0 676.0 1196.0Z" fill="#4f8068" stroke="none" stroke-width="2" stroke-linejoin="round" stroke-linecap="round" />
<path d="M630.0 1240.0 C630.0 1240.0 650.0 1215.0 650.0 1215.0" fill="none" stroke="#b5e6cf" stroke-width="4" stroke-linejoin="round" stroke-linecap="round" />
<path d="M628.0 1262.0 C628.0 1262.0 627.2 1278.7 630.0 1285.0 C632.8 1291.3 645.0 1300.0 645.0 1300.0" fill="none" stroke="#b5e6cf" stroke-width="4" stroke-linejoin="round" stroke-linecap="round" />
<path d="M660.0 1150.0 C660.0 1150.0 658.0 1170.0 658.0 1170.0" fill="none" stroke="#b5e6cf" stroke-width="4" stroke-linejoin="round" stroke-linecap="round" />
<path d="M670.5 1196.0 C670.5 1196.0 683.2 1196.9 683.2 1196.9 C683.2 1196.9 703.0 1237.5 703.0 1237.5 C703.0 1237.5 699.5 1289.0 699.5 1289.0 C699.5 1289.0 656.0 1309.9 656.0 1309.9 C656.0 1309.9 619.0 1286.4 619.0 1286.4 C619.0 1286.4 626.2 1226.7 626.2 1226.7 C626.2 1226.7 670.5 1196.0 670.5 1196.0Z" fill="none" stroke="#363636" stroke-width="1.5" stroke-linejoin="round" stroke-linecap="round" />
<circle cx="674.1" cy="1168.8" r="26.8" fill="#80ccaa"/>
<path d="M683.0 1142.5 C683.0 1142.5 695.0 1150.4 698.0 1155.0 C701.0 1159.6 701.8 1164.2 700.8 1170.0 C699.8 1175.8 696.1 1185.8 692.0 1190.0 C687.9 1194.2 676.0 1195.5 676.0 1195.5 C676.0 1195.5 676.8 1178.8 678.0 1170.0 C679.2 1161.2 683.0 1142.5 683.0 1142.5Z" fill="#4f8068" stroke="none" stroke-width="2" stroke-linejoin="round" stroke-linecap="round" />
<circle cx="674.1" cy="1168.8" r="26.8" fill="none" stroke="#363636" stroke-width="1.5"/>
<path d="M911.0 1196.9 C911.0 1196.9 938.2 1196.9 938.2 1196.9 C938.2 1196.9 961.7 1215.0 961.7 1215.0 C961.7 1215.0 969.8 1275.5 969.8 1275.5 C969.8 1275.5 940.0 1294.5 940.0 1294.5 C940.0 1294.5 914.6 1279.0 914.6 1279.0 C914.6 1279.0 907.4 1226.7 907.4 1226.7 C907.4 1226.7 911.0 1196.9 911.0 1196.9Z" fill="#75c29c" stroke="none" stroke-width="2" stroke-linejoin="round" stroke-linecap="round" />
<path d="M911.0 1196.9 C911.0 1196.9 930.0 1197.0 930.0 1197.0 C930.0 1197.0 947.0 1234.5 950.0 1250.0 C953.0 1265.5 949.7 1282.6 948.0 1290.0 C946.3 1297.4 940.0 1294.5 940.0 1294.5 C940.0 1294.5 914.6 1279.0 914.6 1279.0 C914.6 1279.0 907.4 1226.7 907.4 1226.7 C907.4 1226.7 911.0 1196.9 911.0 1196.9Z" fill="#4f8068" stroke="none" stroke-width="2" stroke-linejoin="round" stroke-linecap="round" />
<path d="M938.0 1205.0 C938.0 1205.0 951.7 1228.3 955.0 1240.0 C958.3 1251.7 958.0 1275.0 958.0 1275.0" fill="none" stroke="#b5e6cf" stroke-width="4" stroke-linejoin="round" stroke-linecap="round" />
<path d="M945.0 1150.0 C945.0 1150.0 950.0 1170.0 950.0 1170.0" fill="none" stroke="#b5e6cf" stroke-width="4" stroke-linejoin="round" stroke-linecap="round" />
<path d="M911.0 1196.9 C911.0 1196.9 938.2 1196.9 938.2 1196.9 C938.2 1196.9 961.7 1215.0 961.7 1215.0 C961.7 1215.0 969.8 1275.5 969.8 1275.5 C969.8 1275.5 940.0 1294.5 940.0 1294.5 C940.0 1294.5 914.6 1279.0 914.6 1279.0 C914.6 1279.0 907.4 1226.7 907.4 1226.7 C907.4 1226.7 911.0 1196.9 911.0 1196.9Z" fill="none" stroke="#363636" stroke-width="1.5" stroke-linejoin="round" stroke-linecap="round" />
<circle cx="928.2" cy="1167" r="27" fill="#80ccaa"/>
<path d="M925.0 1140.2 C925.0 1140.2 910.9 1143.5 907.0 1148.0 C903.1 1152.5 901.7 1160.8 901.5 1167.0 C901.3 1173.2 902.1 1180.5 906.0 1185.0 C909.9 1189.5 925.0 1194.0 925.0 1194.0 C925.0 1194.0 936.2 1181.5 938.0 1175.0 C939.8 1168.5 938.2 1160.8 936.0 1155.0 C933.8 1149.2 925.0 1140.2 925.0 1140.2Z" fill="#4f8068" stroke="none" stroke-width="2" stroke-linejoin="round" stroke-linecap="round" />
<circle cx="928.2" cy="1167" r="27" fill="none" stroke="#363636" stroke-width="1.5"/>
</g>
</g>
</svg>
</body></html>
